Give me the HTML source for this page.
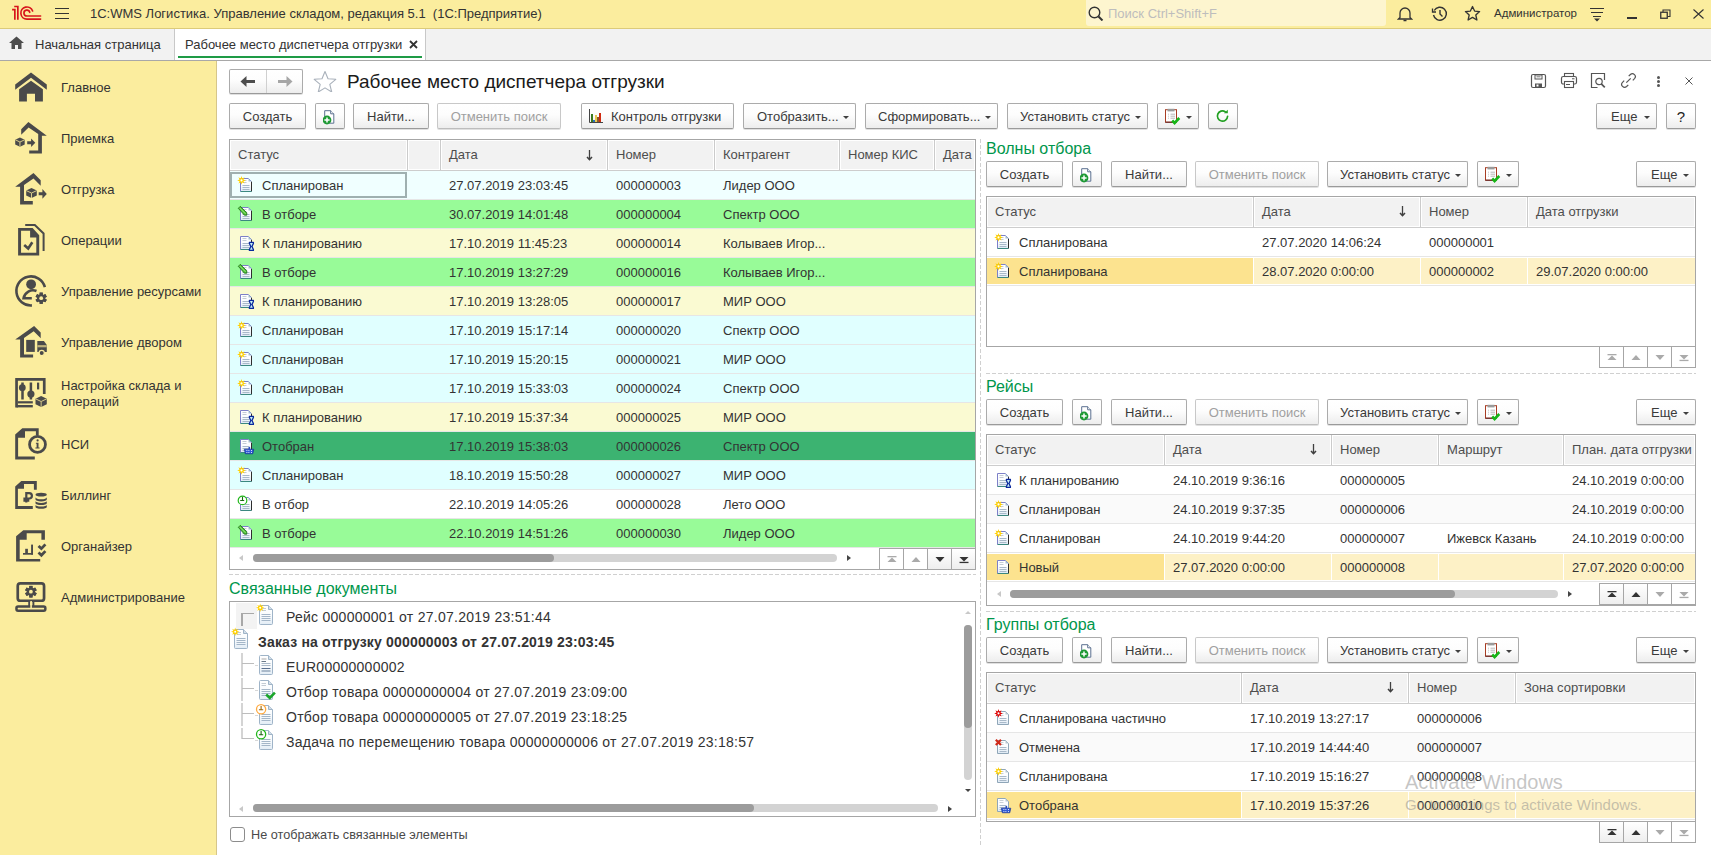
<!DOCTYPE html><html><head><meta charset="utf-8"><style>
*{box-sizing:border-box}
html,body{margin:0;padding:0}
body{width:1711px;height:855px;overflow:hidden;position:relative;background:#fff;font-family:"Liberation Sans",sans-serif;font-size:13px;color:#333}
.a{position:absolute}
.t{position:absolute;white-space:nowrap}
.btn{position:absolute;height:26px;border:1px solid #ababab;border-bottom-color:#9a9a9a;border-radius:2px;background:linear-gradient(#ffffff 0%,#fdfdfd 45%,#ededed 100%);box-shadow:0 1px 0 rgba(0,0,0,0.12);line-height:25px;text-align:center;white-space:nowrap;color:#3a3a3a;font-size:13px}
.btn.dis{color:#a0a0a0;border-color:#c8c8c8;border-bottom-color:#bdbdbd}
.dd{position:absolute;width:0;height:0;border-left:3px solid transparent;border-right:3px solid transparent;border-top:3px solid #404040;top:12px}
.grid{position:absolute;border:1px solid #a6a6a6;background:#fff;overflow:hidden}
.hdr{position:absolute;left:0;top:0;right:0;height:31px;background:#f2f2f2;border-bottom:1px solid #cdcdcd}
.hc{position:absolute;top:0;height:29px;line-height:29px;padding-left:8px;white-space:nowrap;color:#4d4d4d}
.hs{position:absolute;top:0;width:1px;height:30px;background:#cbcbcb}
.hcell{position:absolute;top:0;height:30px;border:1px solid #fff}
.row{position:absolute;left:0;right:0;height:29px;border-bottom:1px solid #e4e4e4}
.cell{position:absolute;top:0;height:28px;line-height:28px;white-space:nowrap;color:#333}
.ttl{position:absolute;font-size:16px;color:#00964b;white-space:nowrap}
.dash{position:absolute;height:1px;background-image:linear-gradient(90deg,#d0d0d0 0,#d0d0d0 4px,transparent 4px,transparent 6px);background-size:6px 1px}
.vdash{position:absolute;width:1px;background-image:linear-gradient(180deg,#d0d0d0 0,#d0d0d0 4px,transparent 4px,transparent 6px);background-size:1px 6px}
.sb{position:absolute;height:8px;border-radius:4px;background:#d3d3d3}
.sbt{position:absolute;height:8px;border-radius:4px;background:#9c9c9c}
.nav{position:absolute;height:22px;border:1px solid #a6a6a6;background:#fff}
.nb{position:absolute;top:0;width:24px;height:20px;border-left:1px solid #a6a6a6}
.nb.en{background:linear-gradient(#fff,#f0f0f0)}
.side{position:absolute;left:61px;font-size:13px;color:#333;white-space:nowrap}
</style></head><body><svg width="0" height="0" style="position:absolute"><defs><linearGradient id="pg" x1="0" y1="0" x2="0" y2="1"><stop offset="0" stop-color="#ffffff"/><stop offset="0.5" stop-color="#fbfdff"/><stop offset="1" stop-color="#dde9f4"/></linearGradient><linearGradient id="pg2" x1="0" y1="0" x2="0" y2="1"><stop offset="0" stop-color="#ffffff"/><stop offset="0.55" stop-color="#f8fbfd"/><stop offset="1" stop-color="#e2ecf5"/></linearGradient></defs></svg>
<div class="a" style="left:0;top:0;width:1711px;height:28px;background:#fbed9e"></div>
<div class="a" style="left:0;top:28px;width:1711px;height:1px;background:#dccb7a"></div>
<svg class="a" style="left:8px;top:2px;" width="40" height="22" viewBox="8 2 40 22"><path d="M12.1 9.6H14.85V19.8M14.2 6.5H17.85V19.8" fill="none" stroke="#d7141c" stroke-width="1.7"/><path d="M32.6 11.0A6.05 6.05 0 1 0 26.9 19.1H40.6M29.75 12.3A2.95 2.95 0 1 0 26.9 16.0H40.6" fill="none" stroke="#d7141c" stroke-width="1.65" stroke-linecap="round"/></svg>
<div class="a" style="left:55px;top:8px;width:14px;height:1px;background:#333"></div>
<div class="a" style="left:55px;top:13px;width:14px;height:1px;background:#333"></div>
<div class="a" style="left:55px;top:18px;width:14px;height:1px;background:#333"></div>
<div class="t" style="left:90px;top:6px;font-size:13px;color:#333;white-space:pre;">1С:WMS Логистика. Управление складом, редакция 5.1  (1С:Предприятие)</div>
<div class="a" style="left:1086px;top:0;width:300px;height:26px;background:#fdf5cf;border-radius:0 0 3px 3px"></div>
<svg class="a" style="left:1088px;top:6px;" width="16" height="15" viewBox="0 0 16 15"><circle cx="6.5" cy="6.5" r="5.3" fill="none" stroke="#333" stroke-width="1.4"/><path d="M10.5 10.5l4 4" stroke="#333" stroke-width="2"/></svg>
<div class="t" style="left:1108px;top:6px;font-size:13px;color:#bdbdbd;">Поиск Ctrl+Shift+F</div>
<svg class="a" style="left:1397px;top:5px;" width="16" height="17" viewBox="0 0 16 17"><path d="M3 12.5V8a5 5 0 0 1 10 0v4.5l1.5 1.5h-13z" fill="none" stroke="#333" stroke-width="1.3"/><path d="M6.5 15.5h3" stroke="#333" stroke-width="1.5"/></svg>
<svg class="a" style="left:1431px;top:5px;" width="17" height="17" viewBox="0 0 17 17"><path d="M3.2 5.5A6.5 6.5 0 1 1 2.5 10" fill="none" stroke="#333" stroke-width="1.4"/><path d="M1.5 3.5v3.5h3.5" fill="none" stroke="#333" stroke-width="1.3"/><path d="M9 5v4l2.5 2.5" fill="none" stroke="#333" stroke-width="1.4"/></svg>
<svg class="a" style="left:1464px;top:5px;" width="17" height="17" viewBox="0 0 17 17"><path d="M8.5 1.5l2.1 4.6 5 .5-3.8 3.4 1.1 5-4.4-2.6-4.4 2.6 1.1-5L1.4 6.6l5-.5z" fill="none" stroke="#333" stroke-width="1.3" stroke-linejoin="round"/></svg>
<div class="t" style="left:1494px;top:7px;font-size:11.5px;color:#333;">Администратор</div>
<svg class="a" style="left:1589px;top:7px;" width="16" height="15" viewBox="0 0 16 15"><path d="M1 1.5h14M2 5.5h12M4 9.5h8" stroke="#333" stroke-width="1.1"/><path d="M5 11.5h6l-3 3z" fill="#333"/></svg>
<div class="a" style="left:1627px;top:17px;width:10px;height:1.5px;background:#333"></div>
<svg class="a" style="left:1660px;top:9px;" width="11" height="10" viewBox="0 0 11 10"><rect x="0.75" y="3.25" width="6.5" height="6" fill="none" stroke="#333" stroke-width="1.3"/><path d="M3 3V1h7v6.5H7.5" fill="none" stroke="#333" stroke-width="1.1"/></svg>
<svg class="a" style="left:1693px;top:9px;" width="11" height="10" viewBox="0 0 11 10"><path d="M0.5 0.5l10 9M10.5 0.5l-10 9" stroke="#333" stroke-width="1.1"/></svg>
<div class="a" style="left:0;top:29px;width:1711px;height:31px;background:#f2f2f2"></div>
<div class="a" style="left:0;top:60px;width:1711px;height:1px;background:#a8a8a8"></div>
<svg class="a" style="left:9px;top:36px;" width="15" height="13" viewBox="0 0 15 13"><path d="M7.5 0.5L0 7h2.5v6h3.5v-4h3v4h3.5V7H15z" fill="#4d4d4d"/></svg>
<div class="t" style="left:35px;top:37px;font-size:13px;color:#333;">Начальная страница</div>
<div class="a" style="left:174px;top:29px;width:1px;height:31px;background:#c8c8c8"></div>
<div class="a" style="left:175px;top:29px;width:250px;height:31px;background:#fff"></div>
<div class="a" style="left:425px;top:29px;width:1px;height:31px;background:#c8c8c8"></div>
<div class="t" style="left:185px;top:37px;font-size:13px;color:#333;">Рабочее место диспетчера отгрузки</div>
<svg class="a" style="left:409px;top:40px;" width="9" height="9" viewBox="0 0 9 9"><path d="M1 1l7 7M8 1l-7 7" stroke="#333" stroke-width="1.8"/></svg>
<div class="a" style="left:178px;top:56px;width:244px;height:2px;background:#1e9b46"></div>
<div class="a" style="left:0;top:61px;width:216px;height:794px;background:#fbed9e"></div>
<div class="a" style="left:216px;top:61px;width:1px;height:794px;background:#d6c68a"></div>
<div class="t" style="left:61px;top:80px;font-size:13px;color:#333;">Главное</div>
<svg class="a" style="left:10px;top:66px;" width="42" height="42" viewBox="0 0 42 42"><path d="M21 6.4L36.8 18.4V23.8L21 11.8L5.2 23.8V18.4Z" fill="#4a4a4a"/><path d="M9.1 23.3L21 14.7L32.9 23.3V35.6H25V27.7H16.9V35.6H9.1Z" fill="#4a4a4a"/></svg>
<div class="t" style="left:61px;top:131px;font-size:13px;color:#333;">Приемка</div>
<svg class="a" style="left:10px;top:117px;" width="42" height="42" viewBox="0 0 42 42"><path d="M11.2 12.3L18.4 4.9L36.8 18.7H31.9V36.6H19.2V33.4H28.2V17.0L18.6 10.6L11.2 17.7Z" fill="#4a4a4a"/><path d="M9.95 20.4L14.7 22.725V27.375L9.95 29.700000000000003L5.199999999999999 27.375V22.725Z" fill="#4a4a4a"/><path d="M5.199999999999999 22.725L9.95 25.05L14.7 22.725M9.95 25.05V29.700000000000003" stroke="#d9cc8a" stroke-width="1" fill="none"/><path d="M17.2 24.3H21.1V21.6L25.3 25.8L21.1 30V27.3H17.2Z" fill="#4a4a4a"/></svg>
<div class="t" style="left:61px;top:182px;font-size:13px;color:#333;">Отгрузка</div>
<svg class="a" style="left:10px;top:168px;" width="42" height="42" viewBox="0 0 42 42"><path d="M5.2 18.7L23.5 4.9L30.7 12.3V17.7L23.5 10.6L14 17.0V32.9H22.8V36.6H10.1V18.7Z" fill="#4a4a4a"/><path d="M21.5 20.1L26.8 22.575V27.525000000000002L21.5 30.0L16.2 27.525000000000002V22.575Z" fill="#4a4a4a"/><path d="M16.2 22.575L21.5 25.05L26.8 22.575M21.5 25.05V30.0" stroke="#d9cc8a" stroke-width="1" fill="none"/><path d="M28.7 24.3H32.4V21.1L36.8 25.9L32.4 30.7V27.3H28.7Z" fill="#4a4a4a"/></svg>
<div class="t" style="left:61px;top:233px;font-size:13px;color:#333;">Операции</div>
<svg class="a" style="left:10px;top:219px;" width="42" height="42" viewBox="0 0 42 42"><path fill-rule="evenodd" d="M8.1 9.1H22.6L29.2 16.2V36.6H8.1Z M11.05 11.8H20.1V18.4H26.3V33.8H11.05Z" fill="#4a4a4a"/><path d="M14.2 26L18.2 29.5L22.3 23.3" stroke="#4a4a4a" stroke-width="2.6" fill="none"/><path d="M15.2 6.1H24.8L33.6 14.4V31.9" stroke="#4a4a4a" stroke-width="2" fill="none"/></svg>
<div class="t" style="left:61px;top:284px;font-size:13px;color:#333;">Управление ресурсами</div>
<svg class="a" style="left:10px;top:270px;" width="42" height="42" viewBox="0 0 42 42"><path d="M34.9 17.15A14.5 14.5 0 1 0 21.9 35.4" stroke="#4a4a4a" stroke-width="2.6" fill="none"/><circle cx="21.1" cy="14.3" r="4.9" fill="#4a4a4a"/><path d="M26.5 21.0A9.5 9.5 0 0 0 13.6 28.2H21.8" stroke="#4a4a4a" stroke-width="2.6" fill="none"/><circle cx="31.2" cy="28.2" r="4.032" fill="#4a4a4a"/><rect x="29.631999999999998" y="22.6" width="3.136" height="11.2" fill="#4a4a4a" transform="rotate(0 31.2 28.2)"/><rect x="29.631999999999998" y="22.6" width="3.136" height="11.2" fill="#4a4a4a" transform="rotate(60 31.2 28.2)"/><rect x="29.631999999999998" y="22.6" width="3.136" height="11.2" fill="#4a4a4a" transform="rotate(120 31.2 28.2)"/><rect x="29.631999999999998" y="22.6" width="3.136" height="11.2" fill="#4a4a4a" transform="rotate(180 31.2 28.2)"/><rect x="29.631999999999998" y="22.6" width="3.136" height="11.2" fill="#4a4a4a" transform="rotate(240 31.2 28.2)"/><rect x="29.631999999999998" y="22.6" width="3.136" height="11.2" fill="#4a4a4a" transform="rotate(300 31.2 28.2)"/><circle cx="31.2" cy="28.2" r="1.9" fill="#fbed9e"/></svg>
<div class="t" style="left:61px;top:335px;font-size:13px;color:#333;">Управление двором</div>
<svg class="a" style="left:10px;top:321px;" width="42" height="42" viewBox="0 0 42 42"><path d="M5.2 18.5L24.1 4.9L30.7 11.5V17.2L23.7 10.2L14 17.0V33.4H23.1V36.6H10.1V18.5Z" fill="#4a4a4a"/><rect x="16.2" y="18.9" width="8.6" height="12" fill="#4a4a4a"/><path d="M27.3 20.1H33.9L36.8 24.1V30.9H27.3Z" fill="#4a4a4a"/><rect x="27.3" y="24.1" width="9.5" height="2.2" fill="#bdb07a"/><circle cx="31.7" cy="31.9" r="2.6" fill="#4a4a4a" stroke="#fbed9e" stroke-width="1.2"/></svg>
<div class="t" style="left:61px;top:378px;font-size:13px;color:#333;">Настройка склада и</div>
<div class="t" style="left:61px;top:394px;font-size:13px;color:#333;">операций</div>
<svg class="a" style="left:10px;top:372px;" width="42" height="42" viewBox="0 0 42 42"><path d="M6.55 35.4V7.45H34.25V22.1" stroke="#4a4a4a" stroke-width="2.7" fill="none"/><path d="M6.55 34.2H22.8" stroke="#4a4a4a" stroke-width="2.4"/><path d="M7.9 30.3H22.8" stroke="#4a4a4a" stroke-width="2.2"/><path d="M12.5 10.6V27.5M20.9 10.6V27.5" stroke="#4a4a4a" stroke-width="2.5"/><path d="M28.1 10.6V17.4" stroke="#4a4a4a" stroke-width="2.2"/><circle cx="12.3" cy="15.7" r="3.4" fill="#4a4a4a"/><circle cx="20.9" cy="22.1" r="3.6" fill="#4a4a4a"/><path d="M31.15 24.1L36.8 26.8V32.2L31.15 34.9L25.5 32.2V26.8Z" fill="#4a4a4a"/><path d="M25.5 26.8L31.15 29.5L36.8 26.8M31.15 29.5V34.9" stroke="#d9cc8a" stroke-width="1" fill="none"/></svg>
<div class="t" style="left:61px;top:437px;font-size:13px;color:#333;">НСИ</div>
<svg class="a" style="left:10px;top:423px;" width="42" height="42" viewBox="0 0 42 42"><path d="M5.2 11.5L12.3 5.2H28.7V12.5H25.9V8.3H15V14.7H8.1V33.4H24.8V36.6H5.2Z" fill="#4a4a4a"/><circle cx="27.5" cy="21.4" r="7.95" stroke="#4a4a4a" stroke-width="2.8" fill="#fbed9e"/><circle cx="27.6" cy="17.4" r="1.1" fill="#4a4a4a"/><path d="M25.9 19.7H28.5V24.5H29.6V25.6H25.4V24.5H26.6V20.7H25.9Z" fill="#4a4a4a"/></svg>
<div class="t" style="left:61px;top:488px;font-size:13px;color:#333;">Биллинг</div>
<svg class="a" style="left:10px;top:474px;" width="42" height="42" viewBox="0 0 42 42"><path d="M5.2 12.5L11.3 7.1H26.8V15.7H23.9V9.9H14V14.7H7.9V31.9H22.8V34.9H5.2Z" fill="#4a4a4a"/><path d="M16.3 28.6V19.1H19.2A2.7 2.7 0 0 1 19.2 24.5H13.4M13.4 26.7H19.3" stroke="#4a4a4a" stroke-width="2.2" fill="none"/><ellipse cx="31.15" cy="20.7" rx="5.65" ry="1.9" fill="#4a4a4a"/><path d="M25.5 23.3A5.65 1.9 0 0 0 36.8 23.3V25.5A5.65 1.9 0 0 1 25.5 25.5Z M25.5 27.0A5.65 1.9 0 0 0 36.8 27.0V29.2A5.65 1.9 0 0 1 25.5 29.2Z M25.5 30.7A5.65 1.9 0 0 0 36.8 30.7V32.9A5.65 1.9 0 0 1 25.5 32.9Z" fill="#4a4a4a"/></svg>
<div class="t" style="left:61px;top:539px;font-size:13px;color:#333;">Органайзер</div>
<svg class="a" style="left:10px;top:525px;" width="42" height="42" viewBox="0 0 42 42"><path d="M6.1 11.3L13.3 5.2H34.9V14.7H31.4V8.2H16.7V14.7H9.7V33.9H30.2V36.6H6.1Z" fill="#4a4a4a"/><rect x="15.2" y="23.8" width="2.7" height="5" fill="#4a4a4a"/><rect x="21.1" y="19.6" width="1.9" height="10" fill="#4a4a4a"/><rect x="13" y="28" width="10" height="1.7" fill="#4a4a4a"/><path d="M28.5 20.9L31.4 23.6L35.4 19.4M28.5 27.6L31.4 30.3L35.4 26.1" stroke="#4a4a4a" stroke-width="2.8" fill="none"/></svg>
<div class="t" style="left:61px;top:590px;font-size:13px;color:#333;">Администрирование</div>
<svg class="a" style="left:10px;top:576px;" width="42" height="42" viewBox="0 0 42 42"><rect x="7.75" y="7.45" width="26.3" height="17.3" rx="2.6" stroke="#4a4a4a" stroke-width="2.7" fill="none"/><path d="M19.2 24.5V30.2M23.4 24.5V30.2" stroke="#4a4a4a" stroke-width="1.9"/><rect x="6.45" y="30.6" width="28.9" height="4.1" rx="1.6" stroke="#4a4a4a" stroke-width="2.5" fill="none"/><rect x="20.3" y="25" width="1.6" height="7" fill="#fbed9e"/><circle cx="20.9" cy="15.7" r="4.176" fill="#4a4a4a"/><rect x="19.276" y="9.899999999999999" width="3.248" height="11.6" fill="#4a4a4a" transform="rotate(0 20.9 15.7)"/><rect x="19.276" y="9.899999999999999" width="3.248" height="11.6" fill="#4a4a4a" transform="rotate(60 20.9 15.7)"/><rect x="19.276" y="9.899999999999999" width="3.248" height="11.6" fill="#4a4a4a" transform="rotate(120 20.9 15.7)"/><rect x="19.276" y="9.899999999999999" width="3.248" height="11.6" fill="#4a4a4a" transform="rotate(180 20.9 15.7)"/><rect x="19.276" y="9.899999999999999" width="3.248" height="11.6" fill="#4a4a4a" transform="rotate(240 20.9 15.7)"/><rect x="19.276" y="9.899999999999999" width="3.248" height="11.6" fill="#4a4a4a" transform="rotate(300 20.9 15.7)"/><circle cx="20.9" cy="15.7" r="1.9" fill="#fbed9e"/></svg>
<div class="btn" style="left:229px;top:69px;width:74px;height:25px"></div>
<div class="a" style="left:266px;top:70px;width:1px;height:23px;background:#d0d0d0"></div>
<svg class="a" style="left:240px;top:75px;" width="16" height="13" viewBox="0 0 16 13"><path d="M6.5 1L0.5 6.5 6.5 12z" fill="#4d4d4d"/><rect x="5" y="5" width="10" height="3" fill="#4d4d4d"/></svg>
<svg class="a" style="left:277px;top:75px;" width="16" height="13" viewBox="0 0 16 13"><path d="M9.5 1L15.5 6.5 9.5 12z" fill="#a6a6a6"/><rect x="1" y="5" width="10" height="3" fill="#a6a6a6"/></svg>
<svg class="a" style="left:313px;top:70px;" width="24" height="22" viewBox="0 0 24 22"><path d="M12 1.5l3 7.2 7.8.6-6 5.1 1.9 7.6L12 17.9l-6.7 4.1 1.9-7.6-6-5.1 7.8-.6z" fill="none" stroke="#a9b1bb" stroke-width="1.1" stroke-linejoin="round"/></svg>
<div class="t" style="left:347px;top:71px;font-size:19px;color:#1a1a1a;">Рабочее место диспетчера отгрузки</div>
<svg class="a" style="left:1530px;top:73px;" width="17" height="16" viewBox="0 0 17 16"><rect x="1.5" y="1.5" width="14" height="13" rx="1.5" fill="none" stroke="#555" stroke-width="1.2"/><rect x="5" y="2" width="7" height="4" fill="none" stroke="#555" stroke-width="1"/><path d="M6.5 3.8H10.5" stroke="#555" stroke-width="0.8"/><rect x="5" y="10.5" width="7" height="4" fill="#555"/><rect x="6.5" y="11.5" width="2" height="2" fill="#fff"/></svg>
<svg class="a" style="left:1560px;top:72px;" width="18" height="17" viewBox="0 0 18 17"><rect x="4.5" y="1.5" width="9" height="3" fill="none" stroke="#555" stroke-width="1.1"/><rect x="1.5" y="4.5" width="15" height="7.5" rx="1.8" fill="none" stroke="#555" stroke-width="1.2"/><rect x="4.5" y="9.5" width="9" height="6" fill="#fff" stroke="#555" stroke-width="1.1"/><path d="M6 12.5H10M12 6.8H14.5" stroke="#555" stroke-width="1"/></svg>
<svg class="a" style="left:1590px;top:72px;" width="17" height="17" viewBox="0 0 17 17"><path d="M7.5 15.5H1.5V1.5H14.5V8" fill="none" stroke="#555" stroke-width="1.2"/><circle cx="9" cy="9.5" r="3.2" fill="none" stroke="#555" stroke-width="1.2"/><path d="M11.3 11.8L14.8 15.3" stroke="#555" stroke-width="1.7"/></svg>
<svg class="a" style="left:1620px;top:72px;" width="17" height="17" viewBox="0 0 17 17"><path d="M6.3 10.7L10.7 6.3" stroke="#555" stroke-width="1.2"/><path d="M8.7 4.2L10.4 2.5A2.9 2.9 0 0 1 14.5 6.6L12.8 8.3" fill="none" stroke="#555" stroke-width="1.2"/><path d="M8.3 12.8L6.6 14.5A2.9 2.9 0 0 1 2.5 10.4L4.2 8.7" fill="none" stroke="#555" stroke-width="1.2"/></svg>
<div class="a" style="left:1657px;top:76px;width:3px;height:3px;border-radius:50%;background:#555"></div>
<div class="a" style="left:1657px;top:80px;width:3px;height:3px;border-radius:50%;background:#555"></div>
<div class="a" style="left:1657px;top:84px;width:3px;height:3px;border-radius:50%;background:#555"></div>
<svg class="a" style="left:1684px;top:76px;" width="10" height="10" viewBox="0 0 10 10"><path d="M1.5 1.5l7 7M8.5 1.5l-7 7" stroke="#555" stroke-width="1"/></svg>
<div class="btn" style="left:229px;top:103px;width:77px">Создать</div>
<div class="btn" style="left:315px;top:103px;width:30px"></div>
<svg class="a" style="left:323px;top:109px;" width="14" height="16" viewBox="0 0 14 16"><path d="M1.7 1.7H7.7L10.8 4.8V14.2H1.7Z" fill="#fff" stroke="#5c7191" stroke-width="1"/><path d="M7.7 1.7V4.8H10.8" fill="#fff" stroke="#5c7191" stroke-width="1"/><circle cx="4" cy="11" r="4.4" fill="#1f9a35"/><path d="M4 8.4V13.6M1.4 11H6.6" stroke="#fff" stroke-width="1.5"/></svg>
<div class="btn" style="left:353px;top:103px;width:76px">Найти...</div>
<div class="btn dis" style="left:437px;top:103px;width:124px">Отменить поиск</div>
<div class="btn" style="left:581px;top:103px;width:153px"><span class="t" style="left:29px;top:0">Контроль отгрузки</span></div>
<svg class="a" style="left:588px;top:108px;" width="16" height="16" viewBox="0 0 16 16"><path d="M1.5 1V14.5H15" fill="none" stroke="#444" stroke-width="1"/><rect x="3" y="6" width="2" height="8" fill="#3a7a20"/><rect x="5" y="12" width="2" height="2" fill="#2a70c0"/><rect x="7" y="7" width="2" height="7" fill="#e8c850"/><rect x="9" y="9" width="2" height="5" fill="#8a5a30"/><rect x="11" y="5" width="2" height="9" fill="#d02a10"/></svg>
<div class="btn" style="left:743px;top:103px;width:113px"><span class="t" style="left:13px;top:0">Отобразить...</span><div class="dd" style="left:99px"></div></div>
<div class="btn" style="left:865px;top:103px;width:133px"><span class="t" style="left:12px;top:0">Сформировать...</span><div class="dd" style="left:119px"></div></div>
<div class="btn" style="left:1007px;top:103px;width:141px"><span class="t" style="left:12px;top:0">Установить статус</span><div class="dd" style="left:127px"></div></div>
<div class="btn" style="left:1157px;top:103px;width:42px"></div>
<svg class="a" style="left:1164px;top:107px;" width="18" height="18" viewBox="0 0 18 18"><rect x="1.5" y="2.7" width="11" height="12.5" fill="#fff" stroke="#a83c22" stroke-width="1"/><path d="M1.5 15.2H12.5" stroke="#5a2020" stroke-width="1"/><rect x="3.5" y="1.8" width="7" height="2.6" fill="#9a9a9a"/><path d="M4.5 7.2H5M4.5 9.2H5M4.5 11.2H5" stroke="#888"/><path d="M6.5 7.2H11M6.5 9.2H11M6.5 11.2H11" stroke="#b8b8b8"/><path d="M8.2 13.5L10.6 16L15.3 11" stroke="#17b517" stroke-width="2.6" fill="none"/></svg>
<div class="dd" style="left:1186px;top:116px"></div>
<div class="btn" style="left:1208px;top:103px;width:30px"></div>
<svg class="a" style="left:1215px;top:108px;" width="16" height="16" viewBox="0 0 16 16"><path d="M12.6 8.3A5.1 5.1 0 1 1 10.2 3.7" fill="none" stroke="#22a022" stroke-width="1.7" stroke-linecap="round"/><path d="M9 5.3H12.8V1.7Z" fill="#22a022"/></svg>
<div class="btn" style="left:1596px;top:103px;width:61px"><span class="t" style="left:14px;top:0">Еще</span><div class="dd" style="left:47px"></div></div>
<div class="btn" style="left:1666px;top:103px;width:30px;color:#222;font-size:15px">?</div>
<div class="grid" style="left:229px;top:139px;width:747px;height:431px">
<div class="hdr"></div>
<div class="hcell" style="left:0px;width:177px"></div>
<div class="hcell" style="left:178px;width:32px"></div>
<div class="hcell" style="left:211px;width:166px"></div>
<div class="hcell" style="left:378px;width:106px"></div>
<div class="hcell" style="left:485px;width:124px"></div>
<div class="hcell" style="left:610px;width:94px"></div>
<div class="hcell" style="left:705px;width:40px"></div>
<div class="hc" style="left:0px">Статус</div>
<div class="hs" style="left:177px"></div>
<div class="hs" style="left:210px"></div>
<div class="hc" style="left:211px">Дата</div>
<div class="hs" style="left:377px"></div>
<div class="hc" style="left:378px">Номер</div>
<div class="hs" style="left:484px"></div>
<div class="hc" style="left:485px">Контрагент</div>
<div class="hs" style="left:609px"></div>
<div class="hc" style="left:610px">Номер КИС</div>
<div class="hs" style="left:704px"></div>
<div class="hc" style="left:705px">Дата</div>
</div>
<div class="a" style="left:230px;top:171px;width:745px;height:28px;background:#f0ffff"></div>
<div class="a" style="left:230px;top:199px;width:745px;height:1px;background:#e6e6e6"></div>
<svg class="a" style="left:234px;top:174px;" width="22" height="22" viewBox="0 0 22 22"><path d="M6.5 4.5H14.5L17.5 7.5V17.5H6.5Z" fill="url(#pg)"/><path d="M8.5 6.5H12.5M8.5 8.5H12.5" stroke="#c4ccd4" stroke-width="1"/><path d="M8.5 11.5H15.5M8.5 13.5H15.5M8.5 15.5H15.5" stroke="#a9b9c9" stroke-width="1"/><path d="M6.5 17.5V4.5H14.5" stroke="#7d80c8" stroke-width="1" fill="none"/><path d="M17.5 7.5V17.5" stroke="#2e2e2e" stroke-width="1"/><path d="M6.5 17.5H17.5" stroke="#3b8880" stroke-width="1"/><path d="M14.5 4.5V7.5H17.5Z" fill="#a7c0cc"/><path d="M14.5 4.5L17.5 7.5" stroke="#8a9cd0" stroke-width="1"/><path d="M7.50 2.10L8.30 4.46L10.54 3.36L9.44 5.60L11.80 6.40L9.44 7.20L10.54 9.44L8.30 8.34L7.50 10.70L6.70 8.34L4.46 9.44L5.56 7.20L3.20 6.40L5.56 5.60L4.46 3.36L6.70 4.46Z" fill="#ffd000"/><circle cx="7.5" cy="6.4" r="1.05" fill="#fff"/></svg>
<div class="t" style="left:262px;top:178px;font-size:13px;">Спланирован</div>
<div class="t" style="left:449px;top:178px;font-size:13px;">27.07.2019 23:03:45</div>
<div class="t" style="left:616px;top:178px;font-size:13px;">000000003</div>
<div class="t" style="left:723px;top:178px;font-size:13px;">Лидер ООО</div>
<div class="a" style="left:230px;top:200px;width:745px;height:28px;background:#98fb98"></div>
<div class="a" style="left:230px;top:228px;width:745px;height:1px;background:#e6e6e6"></div>
<svg class="a" style="left:234px;top:203px;" width="22" height="22" viewBox="0 0 22 22"><path d="M6.5 4.5H14.5L17.5 7.5V17.5H6.5Z" fill="url(#pg)"/><path d="M8.5 6.5H12.5M8.5 8.5H12.5" stroke="#c4ccd4" stroke-width="1"/><path d="M8.5 11.5H15.5M8.5 13.5H15.5M8.5 15.5H15.5" stroke="#a9b9c9" stroke-width="1"/><path d="M6.5 17.5V4.5H14.5" stroke="#7d80c8" stroke-width="1" fill="none"/><path d="M17.5 7.5V17.5" stroke="#2e2e2e" stroke-width="1"/><path d="M6.5 17.5H17.5" stroke="#3b8880" stroke-width="1"/><path d="M14.5 4.5V7.5H17.5Z" fill="#a7c0cc"/><path d="M14.5 4.5L17.5 7.5" stroke="#8a9cd0" stroke-width="1"/><path d="M4.3 5.3L6.3 3.3L12.8 9.8V12.2H10.4Z" fill="#48c030" stroke="#1f6e1a" stroke-width="0.8" stroke-linejoin="round"/><path d="M5.5 4.8L11.5 10.8" stroke="#b8f0a0" stroke-width="0.8"/></svg>
<div class="t" style="left:262px;top:207px;font-size:13px;">В отборе</div>
<div class="t" style="left:449px;top:207px;font-size:13px;">30.07.2019 14:01:48</div>
<div class="t" style="left:616px;top:207px;font-size:13px;">000000004</div>
<div class="t" style="left:723px;top:207px;font-size:13px;">Спектр ООО</div>
<div class="a" style="left:230px;top:229px;width:745px;height:28px;background:#fafad2"></div>
<div class="a" style="left:230px;top:257px;width:745px;height:1px;background:#e6e6e6"></div>
<svg class="a" style="left:234px;top:232px;" width="22" height="22" viewBox="0 0 22 22"><path d="M6.5 4.5H14.5L17.5 7.5V17.5H6.5Z" fill="url(#pg)"/><path d="M8.5 6.5H12.5M8.5 8.5H12.5" stroke="#c4ccd4" stroke-width="1"/><path d="M8.5 11.5H15.5M8.5 13.5H15.5M8.5 15.5H15.5" stroke="#a9b9c9" stroke-width="1"/><path d="M6.5 17.5V4.5H14.5" stroke="#7d80c8" stroke-width="1" fill="none"/><path d="M17.5 7.5V17.5" stroke="#2e2e2e" stroke-width="1"/><path d="M6.5 17.5H17.5" stroke="#3b8880" stroke-width="1"/><path d="M14.5 4.5V7.5H17.5Z" fill="#a7c0cc"/><path d="M14.5 4.5L17.5 7.5" stroke="#8a9cd0" stroke-width="1"/><path d="M15.4 10.4H19.4V11.4L18 14.4L19.4 17.4V18.4H15.4V17.4L16.8 14.4L15.4 11.4Z" fill="#c8f0f4" stroke="#0b2a9e" stroke-width="1.3" stroke-linejoin="round"/></svg>
<div class="t" style="left:262px;top:236px;font-size:13px;">К планированию</div>
<div class="t" style="left:449px;top:236px;font-size:13px;">17.10.2019 11:45:23</div>
<div class="t" style="left:616px;top:236px;font-size:13px;">000000014</div>
<div class="t" style="left:723px;top:236px;font-size:13px;">Колываев Игор...</div>
<div class="a" style="left:230px;top:258px;width:745px;height:28px;background:#98fb98"></div>
<div class="a" style="left:230px;top:286px;width:745px;height:1px;background:#e6e6e6"></div>
<svg class="a" style="left:234px;top:261px;" width="22" height="22" viewBox="0 0 22 22"><path d="M6.5 4.5H14.5L17.5 7.5V17.5H6.5Z" fill="url(#pg)"/><path d="M8.5 6.5H12.5M8.5 8.5H12.5" stroke="#c4ccd4" stroke-width="1"/><path d="M8.5 11.5H15.5M8.5 13.5H15.5M8.5 15.5H15.5" stroke="#a9b9c9" stroke-width="1"/><path d="M6.5 17.5V4.5H14.5" stroke="#7d80c8" stroke-width="1" fill="none"/><path d="M17.5 7.5V17.5" stroke="#2e2e2e" stroke-width="1"/><path d="M6.5 17.5H17.5" stroke="#3b8880" stroke-width="1"/><path d="M14.5 4.5V7.5H17.5Z" fill="#a7c0cc"/><path d="M14.5 4.5L17.5 7.5" stroke="#8a9cd0" stroke-width="1"/><path d="M4.3 5.3L6.3 3.3L12.8 9.8V12.2H10.4Z" fill="#48c030" stroke="#1f6e1a" stroke-width="0.8" stroke-linejoin="round"/><path d="M5.5 4.8L11.5 10.8" stroke="#b8f0a0" stroke-width="0.8"/></svg>
<div class="t" style="left:262px;top:265px;font-size:13px;">В отборе</div>
<div class="t" style="left:449px;top:265px;font-size:13px;">17.10.2019 13:27:29</div>
<div class="t" style="left:616px;top:265px;font-size:13px;">000000016</div>
<div class="t" style="left:723px;top:265px;font-size:13px;">Колываев Игор...</div>
<div class="a" style="left:230px;top:287px;width:745px;height:28px;background:#fafad2"></div>
<div class="a" style="left:230px;top:315px;width:745px;height:1px;background:#e6e6e6"></div>
<svg class="a" style="left:234px;top:290px;" width="22" height="22" viewBox="0 0 22 22"><path d="M6.5 4.5H14.5L17.5 7.5V17.5H6.5Z" fill="url(#pg)"/><path d="M8.5 6.5H12.5M8.5 8.5H12.5" stroke="#c4ccd4" stroke-width="1"/><path d="M8.5 11.5H15.5M8.5 13.5H15.5M8.5 15.5H15.5" stroke="#a9b9c9" stroke-width="1"/><path d="M6.5 17.5V4.5H14.5" stroke="#7d80c8" stroke-width="1" fill="none"/><path d="M17.5 7.5V17.5" stroke="#2e2e2e" stroke-width="1"/><path d="M6.5 17.5H17.5" stroke="#3b8880" stroke-width="1"/><path d="M14.5 4.5V7.5H17.5Z" fill="#a7c0cc"/><path d="M14.5 4.5L17.5 7.5" stroke="#8a9cd0" stroke-width="1"/><path d="M15.4 10.4H19.4V11.4L18 14.4L19.4 17.4V18.4H15.4V17.4L16.8 14.4L15.4 11.4Z" fill="#c8f0f4" stroke="#0b2a9e" stroke-width="1.3" stroke-linejoin="round"/></svg>
<div class="t" style="left:262px;top:294px;font-size:13px;">К планированию</div>
<div class="t" style="left:449px;top:294px;font-size:13px;">17.10.2019 13:28:05</div>
<div class="t" style="left:616px;top:294px;font-size:13px;">000000017</div>
<div class="t" style="left:723px;top:294px;font-size:13px;">МИР ООО</div>
<div class="a" style="left:230px;top:316px;width:745px;height:28px;background:#e0ffff"></div>
<div class="a" style="left:230px;top:344px;width:745px;height:1px;background:#e6e6e6"></div>
<svg class="a" style="left:234px;top:319px;" width="22" height="22" viewBox="0 0 22 22"><path d="M6.5 4.5H14.5L17.5 7.5V17.5H6.5Z" fill="url(#pg)"/><path d="M8.5 6.5H12.5M8.5 8.5H12.5" stroke="#c4ccd4" stroke-width="1"/><path d="M8.5 11.5H15.5M8.5 13.5H15.5M8.5 15.5H15.5" stroke="#a9b9c9" stroke-width="1"/><path d="M6.5 17.5V4.5H14.5" stroke="#7d80c8" stroke-width="1" fill="none"/><path d="M17.5 7.5V17.5" stroke="#2e2e2e" stroke-width="1"/><path d="M6.5 17.5H17.5" stroke="#3b8880" stroke-width="1"/><path d="M14.5 4.5V7.5H17.5Z" fill="#a7c0cc"/><path d="M14.5 4.5L17.5 7.5" stroke="#8a9cd0" stroke-width="1"/><path d="M7.50 2.10L8.30 4.46L10.54 3.36L9.44 5.60L11.80 6.40L9.44 7.20L10.54 9.44L8.30 8.34L7.50 10.70L6.70 8.34L4.46 9.44L5.56 7.20L3.20 6.40L5.56 5.60L4.46 3.36L6.70 4.46Z" fill="#ffd000"/><circle cx="7.5" cy="6.4" r="1.05" fill="#fff"/></svg>
<div class="t" style="left:262px;top:323px;font-size:13px;">Спланирован</div>
<div class="t" style="left:449px;top:323px;font-size:13px;">17.10.2019 15:17:14</div>
<div class="t" style="left:616px;top:323px;font-size:13px;">000000020</div>
<div class="t" style="left:723px;top:323px;font-size:13px;">Спектр ООО</div>
<div class="a" style="left:230px;top:345px;width:745px;height:28px;background:#e0ffff"></div>
<div class="a" style="left:230px;top:373px;width:745px;height:1px;background:#e6e6e6"></div>
<svg class="a" style="left:234px;top:348px;" width="22" height="22" viewBox="0 0 22 22"><path d="M6.5 4.5H14.5L17.5 7.5V17.5H6.5Z" fill="url(#pg)"/><path d="M8.5 6.5H12.5M8.5 8.5H12.5" stroke="#c4ccd4" stroke-width="1"/><path d="M8.5 11.5H15.5M8.5 13.5H15.5M8.5 15.5H15.5" stroke="#a9b9c9" stroke-width="1"/><path d="M6.5 17.5V4.5H14.5" stroke="#7d80c8" stroke-width="1" fill="none"/><path d="M17.5 7.5V17.5" stroke="#2e2e2e" stroke-width="1"/><path d="M6.5 17.5H17.5" stroke="#3b8880" stroke-width="1"/><path d="M14.5 4.5V7.5H17.5Z" fill="#a7c0cc"/><path d="M14.5 4.5L17.5 7.5" stroke="#8a9cd0" stroke-width="1"/><path d="M7.50 2.10L8.30 4.46L10.54 3.36L9.44 5.60L11.80 6.40L9.44 7.20L10.54 9.44L8.30 8.34L7.50 10.70L6.70 8.34L4.46 9.44L5.56 7.20L3.20 6.40L5.56 5.60L4.46 3.36L6.70 4.46Z" fill="#ffd000"/><circle cx="7.5" cy="6.4" r="1.05" fill="#fff"/></svg>
<div class="t" style="left:262px;top:352px;font-size:13px;">Спланирован</div>
<div class="t" style="left:449px;top:352px;font-size:13px;">17.10.2019 15:20:15</div>
<div class="t" style="left:616px;top:352px;font-size:13px;">000000021</div>
<div class="t" style="left:723px;top:352px;font-size:13px;">МИР ООО</div>
<div class="a" style="left:230px;top:374px;width:745px;height:28px;background:#e0ffff"></div>
<div class="a" style="left:230px;top:402px;width:745px;height:1px;background:#e6e6e6"></div>
<svg class="a" style="left:234px;top:377px;" width="22" height="22" viewBox="0 0 22 22"><path d="M6.5 4.5H14.5L17.5 7.5V17.5H6.5Z" fill="url(#pg)"/><path d="M8.5 6.5H12.5M8.5 8.5H12.5" stroke="#c4ccd4" stroke-width="1"/><path d="M8.5 11.5H15.5M8.5 13.5H15.5M8.5 15.5H15.5" stroke="#a9b9c9" stroke-width="1"/><path d="M6.5 17.5V4.5H14.5" stroke="#7d80c8" stroke-width="1" fill="none"/><path d="M17.5 7.5V17.5" stroke="#2e2e2e" stroke-width="1"/><path d="M6.5 17.5H17.5" stroke="#3b8880" stroke-width="1"/><path d="M14.5 4.5V7.5H17.5Z" fill="#a7c0cc"/><path d="M14.5 4.5L17.5 7.5" stroke="#8a9cd0" stroke-width="1"/><path d="M7.50 2.10L8.30 4.46L10.54 3.36L9.44 5.60L11.80 6.40L9.44 7.20L10.54 9.44L8.30 8.34L7.50 10.70L6.70 8.34L4.46 9.44L5.56 7.20L3.20 6.40L5.56 5.60L4.46 3.36L6.70 4.46Z" fill="#ffd000"/><circle cx="7.5" cy="6.4" r="1.05" fill="#fff"/></svg>
<div class="t" style="left:262px;top:381px;font-size:13px;">Спланирован</div>
<div class="t" style="left:449px;top:381px;font-size:13px;">17.10.2019 15:33:03</div>
<div class="t" style="left:616px;top:381px;font-size:13px;">000000024</div>
<div class="t" style="left:723px;top:381px;font-size:13px;">Спектр ООО</div>
<div class="a" style="left:230px;top:403px;width:745px;height:28px;background:#fafad2"></div>
<div class="a" style="left:230px;top:431px;width:745px;height:1px;background:#e6e6e6"></div>
<svg class="a" style="left:234px;top:406px;" width="22" height="22" viewBox="0 0 22 22"><path d="M6.5 4.5H14.5L17.5 7.5V17.5H6.5Z" fill="url(#pg)"/><path d="M8.5 6.5H12.5M8.5 8.5H12.5" stroke="#c4ccd4" stroke-width="1"/><path d="M8.5 11.5H15.5M8.5 13.5H15.5M8.5 15.5H15.5" stroke="#a9b9c9" stroke-width="1"/><path d="M6.5 17.5V4.5H14.5" stroke="#7d80c8" stroke-width="1" fill="none"/><path d="M17.5 7.5V17.5" stroke="#2e2e2e" stroke-width="1"/><path d="M6.5 17.5H17.5" stroke="#3b8880" stroke-width="1"/><path d="M14.5 4.5V7.5H17.5Z" fill="#a7c0cc"/><path d="M14.5 4.5L17.5 7.5" stroke="#8a9cd0" stroke-width="1"/><path d="M15.4 10.4H19.4V11.4L18 14.4L19.4 17.4V18.4H15.4V17.4L16.8 14.4L15.4 11.4Z" fill="#c8f0f4" stroke="#0b2a9e" stroke-width="1.3" stroke-linejoin="round"/></svg>
<div class="t" style="left:262px;top:410px;font-size:13px;">К планированию</div>
<div class="t" style="left:449px;top:410px;font-size:13px;">17.10.2019 15:37:34</div>
<div class="t" style="left:616px;top:410px;font-size:13px;">000000025</div>
<div class="t" style="left:723px;top:410px;font-size:13px;">МИР ООО</div>
<div class="a" style="left:230px;top:432px;width:745px;height:28px;background:#3cb371"></div>
<div class="a" style="left:230px;top:460px;width:745px;height:1px;background:#e6e6e6"></div>
<svg class="a" style="left:234px;top:435px;" width="22" height="22" viewBox="0 0 22 22"><path d="M6.5 4.5H14.5L17.5 7.5V17.5H6.5Z" fill="url(#pg)"/><path d="M8.5 6.5H12.5M8.5 8.5H12.5" stroke="#c4ccd4" stroke-width="1"/><path d="M8.5 11.5H15.5M8.5 13.5H15.5M8.5 15.5H15.5" stroke="#a9b9c9" stroke-width="1"/><path d="M6.5 17.5V4.5H14.5" stroke="#7d80c8" stroke-width="1" fill="none"/><path d="M17.5 7.5V17.5" stroke="#2e2e2e" stroke-width="1"/><path d="M6.5 17.5H17.5" stroke="#3b8880" stroke-width="1"/><path d="M14.5 4.5V7.5H17.5Z" fill="#a7c0cc"/><path d="M14.5 4.5L17.5 7.5" stroke="#8a9cd0" stroke-width="1"/><rect x="14.5" y="12" width="1.6" height="2.5" fill="#2a50c8"/><path d="M10.3 14.2H19.8L18.8 18.8H11.3Z" fill="#2f5ad8" stroke="#0f2a90" stroke-width="0.6"/><path d="M12.5 15.5h.8M14.5 15.5h.8M17 15.5h.8M12.5 17.5h.8M14.5 17.5h.8M17 17.5h.8" stroke="#fff" stroke-width="1.1"/></svg>
<div class="t" style="left:262px;top:439px;font-size:13px;">Отобран</div>
<div class="t" style="left:449px;top:439px;font-size:13px;">17.10.2019 15:38:03</div>
<div class="t" style="left:616px;top:439px;font-size:13px;">000000026</div>
<div class="t" style="left:723px;top:439px;font-size:13px;">Спектр ООО</div>
<div class="a" style="left:230px;top:461px;width:745px;height:28px;background:#e0ffff"></div>
<div class="a" style="left:230px;top:489px;width:745px;height:1px;background:#e6e6e6"></div>
<svg class="a" style="left:234px;top:464px;" width="22" height="22" viewBox="0 0 22 22"><path d="M6.5 4.5H14.5L17.5 7.5V17.5H6.5Z" fill="url(#pg)"/><path d="M8.5 6.5H12.5M8.5 8.5H12.5" stroke="#c4ccd4" stroke-width="1"/><path d="M8.5 11.5H15.5M8.5 13.5H15.5M8.5 15.5H15.5" stroke="#a9b9c9" stroke-width="1"/><path d="M6.5 17.5V4.5H14.5" stroke="#7d80c8" stroke-width="1" fill="none"/><path d="M17.5 7.5V17.5" stroke="#2e2e2e" stroke-width="1"/><path d="M6.5 17.5H17.5" stroke="#3b8880" stroke-width="1"/><path d="M14.5 4.5V7.5H17.5Z" fill="#a7c0cc"/><path d="M14.5 4.5L17.5 7.5" stroke="#8a9cd0" stroke-width="1"/><path d="M7.50 2.10L8.30 4.46L10.54 3.36L9.44 5.60L11.80 6.40L9.44 7.20L10.54 9.44L8.30 8.34L7.50 10.70L6.70 8.34L4.46 9.44L5.56 7.20L3.20 6.40L5.56 5.60L4.46 3.36L6.70 4.46Z" fill="#ffd000"/><circle cx="7.5" cy="6.4" r="1.05" fill="#fff"/></svg>
<div class="t" style="left:262px;top:468px;font-size:13px;">Спланирован</div>
<div class="t" style="left:449px;top:468px;font-size:13px;">18.10.2019 15:50:28</div>
<div class="t" style="left:616px;top:468px;font-size:13px;">000000027</div>
<div class="t" style="left:723px;top:468px;font-size:13px;">МИР ООО</div>
<div class="a" style="left:230px;top:490px;width:745px;height:28px;background:#ffffff"></div>
<div class="a" style="left:230px;top:518px;width:745px;height:1px;background:#e6e6e6"></div>
<svg class="a" style="left:234px;top:493px;" width="22" height="22" viewBox="0 0 22 22"><path d="M6.5 4.5H14.5L17.5 7.5V17.5H6.5Z" fill="url(#pg)"/><path d="M8.5 6.5H12.5M8.5 8.5H12.5" stroke="#c4ccd4" stroke-width="1"/><path d="M8.5 11.5H15.5M8.5 13.5H15.5M8.5 15.5H15.5" stroke="#a9b9c9" stroke-width="1"/><path d="M6.5 17.5V4.5H14.5" stroke="#7d80c8" stroke-width="1" fill="none"/><path d="M17.5 7.5V17.5" stroke="#2e2e2e" stroke-width="1"/><path d="M6.5 17.5H17.5" stroke="#3b8880" stroke-width="1"/><path d="M14.5 4.5V7.5H17.5Z" fill="#a7c0cc"/><path d="M14.5 4.5L17.5 7.5" stroke="#8a9cd0" stroke-width="1"/><circle cx="8.5" cy="7.4" r="4.3" fill="#fff" stroke="#22b81c" stroke-width="1.2"/><path d="M8.5 3.8V8M6.2 7.5H10.2" stroke="#1a6a10" stroke-width="1.1"/></svg>
<div class="t" style="left:262px;top:497px;font-size:13px;">В отбор</div>
<div class="t" style="left:449px;top:497px;font-size:13px;">22.10.2019 14:05:26</div>
<div class="t" style="left:616px;top:497px;font-size:13px;">000000028</div>
<div class="t" style="left:723px;top:497px;font-size:13px;">Лето ООО</div>
<div class="a" style="left:230px;top:519px;width:745px;height:28px;background:#98fb98"></div>
<div class="a" style="left:230px;top:547px;width:745px;height:1px;background:#e6e6e6"></div>
<svg class="a" style="left:234px;top:522px;" width="22" height="22" viewBox="0 0 22 22"><path d="M6.5 4.5H14.5L17.5 7.5V17.5H6.5Z" fill="url(#pg)"/><path d="M8.5 6.5H12.5M8.5 8.5H12.5" stroke="#c4ccd4" stroke-width="1"/><path d="M8.5 11.5H15.5M8.5 13.5H15.5M8.5 15.5H15.5" stroke="#a9b9c9" stroke-width="1"/><path d="M6.5 17.5V4.5H14.5" stroke="#7d80c8" stroke-width="1" fill="none"/><path d="M17.5 7.5V17.5" stroke="#2e2e2e" stroke-width="1"/><path d="M6.5 17.5H17.5" stroke="#3b8880" stroke-width="1"/><path d="M14.5 4.5V7.5H17.5Z" fill="#a7c0cc"/><path d="M14.5 4.5L17.5 7.5" stroke="#8a9cd0" stroke-width="1"/><path d="M4.3 5.3L6.3 3.3L12.8 9.8V12.2H10.4Z" fill="#48c030" stroke="#1f6e1a" stroke-width="0.8" stroke-linejoin="round"/><path d="M5.5 4.8L11.5 10.8" stroke="#b8f0a0" stroke-width="0.8"/></svg>
<div class="t" style="left:262px;top:526px;font-size:13px;">В отборе</div>
<div class="t" style="left:449px;top:526px;font-size:13px;">22.10.2019 14:51:26</div>
<div class="t" style="left:616px;top:526px;font-size:13px;">000000030</div>
<div class="t" style="left:723px;top:526px;font-size:13px;">Лидер ООО</div>
<svg class="a" style="left:584px;top:149px;" width="11" height="12" viewBox="0 0 11 12"><path d="M5.5 1V10.5" stroke="#404040" stroke-width="1.3"/><path d="M3 8L5.5 10.6L8 8" stroke="#404040" stroke-width="1.5" fill="none"/></svg>
<div class="a" style="left:230px;top:172px;width:177px;height:26px;border:2px solid #9fb0b0"></div>
<div class="a" style="left:239px;top:555px;width:0;height:0;border-top:3px solid transparent;border-bottom:3px solid transparent;border-right:4px solid #c8c8c8"></div>
<div class="sb" style="left:253px;top:554px;width:584px"></div>
<div class="sbt" style="left:253px;top:554px;width:301px"></div>
<div class="a" style="left:847px;top:555px;width:0;height:0;border-top:3px solid transparent;border-bottom:3px solid transparent;border-left:4px solid #444"></div>
<div class="a" style="left:879px;top:548px;width:97px;height:22px;border:1px solid #a6a6a6;background:#fff"></div>
<svg class="a" style="left:887px;top:556px;" width="10" height="8" viewBox="0 0 10 8"><rect x="0.5" y="0" width="9" height="1.3" fill="#aaaaaa"/><path d="M5 1.6L9.5 6H0.5z" fill="#aaaaaa"/></svg>
<div class="a" style="left:903px;top:548px;width:1px;height:22px;background:#a6a6a6"></div>
<svg class="a" style="left:911px;top:556px;" width="10" height="8" viewBox="0 0 10 8"><path d="M5 1L9.5 6h-9z" fill="#aaaaaa"/></svg>
<div class="a" style="left:928px;top:549px;width:23px;height:20px;background:linear-gradient(#fff,#eeeeee)"></div>
<div class="a" style="left:927px;top:548px;width:1px;height:22px;background:#a6a6a6"></div>
<svg class="a" style="left:935px;top:556px;" width="10" height="8" viewBox="0 0 10 8"><path d="M5 6L9.5 1h-9z" fill="#333"/></svg>
<div class="a" style="left:952px;top:549px;width:23px;height:20px;background:linear-gradient(#fff,#eeeeee)"></div>
<div class="a" style="left:951px;top:548px;width:1px;height:22px;background:#a6a6a6"></div>
<svg class="a" style="left:959px;top:556px;" width="10" height="8" viewBox="0 0 10 8"><path d="M5 5.6L9.5 1h-9z" fill="#333"/><rect x="0.5" y="5.8" width="9" height="1.3" fill="#333"/></svg>
<div class="dash" style="left:229px;top:574px;width:747px"></div>
<div class="vdash" style="left:980px;top:139px;height:706px"></div>
<div class="ttl" style="left:229px;top:580px">Связанные документы</div>
<div class="a" style="left:229px;top:601px;width:747px;height:216px;border:1px solid #a6a6a6;background:#fff"></div>
<div class="a" style="left:236px;top:603px;width:21px;height:26px;background:#f3f3f3"></div>
<div class="a" style="left:241px;top:613px;width:1.5px;height:13px;background:#a8a8a8"></div>
<div class="a" style="left:241px;top:612.5px;width:13px;height:1.5px;background:#a8a8a8"></div>
<svg class="a" style="left:257px;top:605px;overflow:visible" width="20" height="21" viewBox="-1 0 20 21"><path d="M2.5 0.5H10.5L14.5 4.5V18.5Q14.5 19.5 13.5 19.5H2.5Q1.5 19.5 1.5 18.5V1.5Q1.5 0.5 2.5 0.5Z" fill="url(#pg2)" stroke="#9fb4c8" stroke-width="1"/><path d="M10.5 0.5V4.5H14.5" fill="#d2dee8" stroke="#9fb4c8" stroke-width="1"/><path d="M3.5 3.5H8M3.5 5.5H8" stroke="#c4ccd4" stroke-width="1"/><path d="M3.5 9.5H12.5M3.5 11.5H12.5M3.5 13.5H12.5M3.5 15.5H12.5" stroke="#a4b6c8" stroke-width="1"/><path d="M2.20 -1.40L2.97 0.95L5.17 -0.17L4.05 2.03L6.40 2.80L4.05 3.57L5.17 5.77L2.97 4.65L2.20 7.00L1.43 4.65L-0.77 5.77L0.35 3.57L-2.00 2.80L0.35 2.03L-0.77 -0.17L1.43 0.95Z" fill="#ffd000"/><circle cx="2.2" cy="2.8" r="1.00" fill="#fff"/></svg>
<div class="t" style="left:286px;top:609px;font-size:14px;color:#333;letter-spacing:0.26px;">Рейс 000000001 от 27.07.2019 23:51:44</div>
<svg class="a" style="left:232px;top:629px;overflow:visible" width="20" height="21" viewBox="-1 0 20 21"><path d="M2.5 0.5H10.5L14.5 4.5V18.5Q14.5 19.5 13.5 19.5H2.5Q1.5 19.5 1.5 18.5V1.5Q1.5 0.5 2.5 0.5Z" fill="url(#pg2)" stroke="#9fb4c8" stroke-width="1"/><path d="M10.5 0.5V4.5H14.5" fill="#d2dee8" stroke="#9fb4c8" stroke-width="1"/><path d="M3.5 3.5H8M3.5 5.5H8" stroke="#c4ccd4" stroke-width="1"/><path d="M3.5 9.5H12.5M3.5 11.5H12.5M3.5 13.5H12.5M3.5 15.5H12.5" stroke="#a4b6c8" stroke-width="1"/><path d="M2.20 -1.40L2.97 0.95L5.17 -0.17L4.05 2.03L6.40 2.80L4.05 3.57L5.17 5.77L2.97 4.65L2.20 7.00L1.43 4.65L-0.77 5.77L0.35 3.57L-2.00 2.80L0.35 2.03L-0.77 -0.17L1.43 0.95Z" fill="#ffd000"/><circle cx="2.2" cy="2.8" r="1.00" fill="#fff"/></svg>
<div class="t" style="left:258px;top:634px;font-size:14px;color:#333;font-weight:bold;letter-spacing:0.17px;">Заказ на отгрузку 000000003 от 27.07.2019 23:03:45</div>
<svg class="a" style="left:257px;top:655px;overflow:visible" width="20" height="21" viewBox="-1 0 20 21"><path d="M2.5 0.5H10.5L14.5 4.5V18.5Q14.5 19.5 13.5 19.5H2.5Q1.5 19.5 1.5 18.5V1.5Q1.5 0.5 2.5 0.5Z" fill="url(#pg2)" stroke="#9fb4c8" stroke-width="1"/><path d="M10.5 0.5V4.5H14.5" fill="#d2dee8" stroke="#9fb4c8" stroke-width="1"/><path d="M3.5 4H8.5" stroke="#c8c8c8" stroke-width="1.6"/><path d="M3.5 6.5H8" stroke="#6a7a8a" stroke-width="1"/><path d="M3.5 8.5H12.5M3.5 10.5H12.5" stroke="#a8b8c8" stroke-width="1"/><path d="M3.5 13.5H12.5" stroke="#5a7090" stroke-width="1"/><path d="M3.5 16H12.5" stroke="#9aacbf" stroke-width="1.6"/></svg>
<div class="t" style="left:286px;top:659px;font-size:14px;color:#333;letter-spacing:0.26px;">EUR00000000002</div>
<svg class="a" style="left:257px;top:680px;overflow:visible" width="20" height="21" viewBox="-1 0 20 21"><path d="M2.5 0.5H10.5L14.5 4.5V18.5Q14.5 19.5 13.5 19.5H2.5Q1.5 19.5 1.5 18.5V1.5Q1.5 0.5 2.5 0.5Z" fill="url(#pg2)" stroke="#9fb4c8" stroke-width="1"/><path d="M10.5 0.5V4.5H14.5" fill="#d2dee8" stroke="#9fb4c8" stroke-width="1"/><path d="M3.5 3.5H8M3.5 5.5H8" stroke="#c4ccd4" stroke-width="1"/><path d="M3.5 9.5H12.5M3.5 11.5H12.5M3.5 13.5H12.5M3.5 15.5H12.5" stroke="#a4b6c8" stroke-width="1"/><path d="M8.2 14.5L11.8 18L16.9 12.6" stroke="#1aa52a" stroke-width="2.6" fill="none"/></svg>
<div class="t" style="left:286px;top:684px;font-size:14px;color:#333;letter-spacing:0.26px;">Отбор товара 00000000004 от 27.07.2019 23:09:00</div>
<svg class="a" style="left:257px;top:705px;overflow:visible" width="20" height="21" viewBox="-1 0 20 21"><path d="M2.5 0.5H10.5L14.5 4.5V18.5Q14.5 19.5 13.5 19.5H2.5Q1.5 19.5 1.5 18.5V1.5Q1.5 0.5 2.5 0.5Z" fill="url(#pg2)" stroke="#9fb4c8" stroke-width="1"/><path d="M10.5 0.5V4.5H14.5" fill="#d2dee8" stroke="#9fb4c8" stroke-width="1"/><path d="M3.5 3.5H8M3.5 5.5H8" stroke="#c4ccd4" stroke-width="1"/><path d="M3.5 9.5H12.5M3.5 11.5H12.5M3.5 13.5H12.5M3.5 15.5H12.5" stroke="#a4b6c8" stroke-width="1"/><circle cx="3.1" cy="4.3" r="4.6" fill="#fff" stroke="#ffaa40" stroke-width="1.3"/><path d="M3.1 0.9V5M0.9 4.8H5.2" stroke="#9a6a10" stroke-width="1.1"/></svg>
<div class="t" style="left:286px;top:709px;font-size:14px;color:#333;letter-spacing:0.26px;">Отбор товара 00000000005 от 27.07.2019 23:18:25</div>
<svg class="a" style="left:257px;top:730px;overflow:visible" width="20" height="21" viewBox="-1 0 20 21"><path d="M2.5 0.5H10.5L14.5 4.5V18.5Q14.5 19.5 13.5 19.5H2.5Q1.5 19.5 1.5 18.5V1.5Q1.5 0.5 2.5 0.5Z" fill="url(#pg2)" stroke="#9fb4c8" stroke-width="1"/><path d="M10.5 0.5V4.5H14.5" fill="#d2dee8" stroke="#9fb4c8" stroke-width="1"/><path d="M3.5 3.5H8M3.5 5.5H8" stroke="#c4ccd4" stroke-width="1"/><path d="M3.5 9.5H12.5M3.5 11.5H12.5M3.5 13.5H12.5M3.5 15.5H12.5" stroke="#a4b6c8" stroke-width="1"/><circle cx="3.1" cy="4.3" r="4.6" fill="#fff" stroke="#22b81c" stroke-width="1.3"/><path d="M3.1 0.9V5M0.9 4.8H5.2" stroke="#1a6a10" stroke-width="1.1"/></svg>
<div class="t" style="left:286px;top:734px;font-size:14px;color:#333;letter-spacing:0.26px;">Задача по перемещению товара 00000000006 от 27.07.2019 23:18:57</div>
<div class="a" style="left:241px;top:653px;width:2px;height:23px;background:#d4d4d4"></div>
<div class="a" style="left:242px;top:663px;width:12px;height:1px;background:#bdbdbd"></div>
<div class="a" style="left:255px;top:665px;width:3px;height:1px;background:#d8d8d8"></div>
<div class="a" style="left:241px;top:678px;width:2px;height:23px;background:#d4d4d4"></div>
<div class="a" style="left:242px;top:688px;width:12px;height:1px;background:#bdbdbd"></div>
<div class="a" style="left:255px;top:690px;width:3px;height:1px;background:#d8d8d8"></div>
<div class="a" style="left:241px;top:703px;width:2px;height:23px;background:#d4d4d4"></div>
<div class="a" style="left:242px;top:713px;width:12px;height:1px;background:#bdbdbd"></div>
<div class="a" style="left:255px;top:715px;width:3px;height:1px;background:#d8d8d8"></div>
<div class="a" style="left:241px;top:728px;width:2px;height:11px;background:#d4d4d4"></div>
<div class="a" style="left:242px;top:738px;width:12px;height:1px;background:#bdbdbd"></div>
<div class="a" style="left:255px;top:740px;width:3px;height:1px;background:#d8d8d8"></div>
<div class="a" style="left:965px;top:611px;width:0;height:0;border-left:3px solid transparent;border-right:3px solid transparent;border-bottom:3px solid #c8c8c8"></div>
<div class="a" style="left:964px;top:625px;width:8px;height:155px;border-radius:4px;background:#d3d3d3"></div>
<div class="a" style="left:964px;top:625px;width:8px;height:103px;border-radius:4px;background:#9c9c9c"></div>
<div class="a" style="left:965px;top:789px;width:0;height:0;border-left:3px solid transparent;border-right:3px solid transparent;border-top:3px solid #444"></div>
<div class="a" style="left:239px;top:806px;width:0;height:0;border-top:3px solid transparent;border-bottom:3px solid transparent;border-right:4px solid #c8c8c8"></div>
<div class="sb" style="left:253px;top:804px;width:685px"></div>
<div class="sbt" style="left:253px;top:804px;width:501px"></div>
<div class="a" style="left:948px;top:806px;width:0;height:0;border-top:3px solid transparent;border-bottom:3px solid transparent;border-left:4px solid #444"></div>
<div class="a" style="left:230px;top:827px;width:15px;height:15px;border:1px solid #8c8c8c;border-radius:3px;background:#fff"></div>
<div class="t" style="left:251px;top:828px;font-size:12.7px;color:#4a4a4a;">Не отображать связанные элементы</div>
<div class="ttl" style="left:986px;top:140px">Волны отбора</div>
<div class="btn" style="left:986px;top:161px;width:77px">Создать</div>
<div class="btn" style="left:1072px;top:161px;width:30px"></div>
<svg class="a" style="left:1080px;top:167px;" width="14" height="16" viewBox="0 0 14 16"><path d="M1.7 1.7H7.7L10.8 4.8V14.2H1.7Z" fill="#fff" stroke="#5c7191" stroke-width="1"/><path d="M7.7 1.7V4.8H10.8" fill="#fff" stroke="#5c7191" stroke-width="1"/><circle cx="4" cy="11" r="4.4" fill="#1f9a35"/><path d="M4 8.4V13.6M1.4 11H6.6" stroke="#fff" stroke-width="1.5"/></svg>
<div class="btn" style="left:1111px;top:161px;width:76px">Найти...</div>
<div class="btn dis" style="left:1195px;top:161px;width:124px">Отменить поиск</div>
<div class="btn" style="left:1327px;top:161px;width:141px"><span class="t" style="left:12px;top:0">Установить статус</span><div class="dd" style="left:127px"></div></div>
<div class="btn" style="left:1477px;top:161px;width:42px"></div>
<svg class="a" style="left:1484px;top:165px;" width="18" height="18" viewBox="0 0 18 18"><rect x="1.5" y="2.7" width="11" height="12.5" fill="#fff" stroke="#a83c22" stroke-width="1"/><path d="M1.5 15.2H12.5" stroke="#5a2020" stroke-width="1"/><rect x="3.5" y="1.8" width="7" height="2.6" fill="#9a9a9a"/><path d="M4.5 7.2H5M4.5 9.2H5M4.5 11.2H5" stroke="#888"/><path d="M6.5 7.2H11M6.5 9.2H11M6.5 11.2H11" stroke="#b8b8b8"/><path d="M8.2 13.5L10.6 16L15.3 11" stroke="#17b517" stroke-width="2.6" fill="none"/></svg>
<div class="dd" style="left:1506px;top:174px"></div>
<div class="btn" style="left:1636px;top:161px;width:60px"><span class="t" style="left:14px;top:0">Еще</span><div class="dd" style="left:46px"></div></div>
<div class="grid" style="left:986px;top:196px;width:710px;height:151px">
<div class="hdr"></div>
<div class="hcell" style="left:0px;width:266px"></div>
<div class="hcell" style="left:267px;width:166px"></div>
<div class="hcell" style="left:434px;width:106px"></div>
<div class="hcell" style="left:541px;width:167px"></div>
<div class="hc" style="left:0px">Статус</div>
<div class="hs" style="left:266px"></div>
<div class="hc" style="left:267px">Дата</div>
<div class="hs" style="left:433px"></div>
<div class="hc" style="left:434px">Номер</div>
<div class="hs" style="left:540px"></div>
<div class="hc" style="left:541px">Дата отгрузки</div>
</div>
<svg class="a" style="left:1397px;top:205px;" width="11" height="12" viewBox="0 0 11 12"><path d="M5.5 1V10.5" stroke="#404040" stroke-width="1.3"/><path d="M3 8L5.5 10.6L8 8" stroke="#404040" stroke-width="1.5" fill="none"/></svg>
<div class="a" style="left:987px;top:228px;width:708px;height:28px;background:#fff"></div>
<div class="a" style="left:987px;top:256px;width:708px;height:1px;background:#e6e6e6"></div>
<svg class="a" style="left:991px;top:231px;" width="22" height="22" viewBox="0 0 22 22"><path d="M6.5 4.5H14.5L17.5 7.5V17.5H6.5Z" fill="url(#pg)"/><path d="M8.5 6.5H12.5M8.5 8.5H12.5" stroke="#c4ccd4" stroke-width="1"/><path d="M8.5 11.5H15.5M8.5 13.5H15.5M8.5 15.5H15.5" stroke="#a9b9c9" stroke-width="1"/><path d="M6.5 17.5V4.5H14.5" stroke="#7d80c8" stroke-width="1" fill="none"/><path d="M17.5 7.5V17.5" stroke="#2e2e2e" stroke-width="1"/><path d="M6.5 17.5H17.5" stroke="#3b8880" stroke-width="1"/><path d="M14.5 4.5V7.5H17.5Z" fill="#a7c0cc"/><path d="M14.5 4.5L17.5 7.5" stroke="#8a9cd0" stroke-width="1"/><path d="M7.50 2.10L8.30 4.46L10.54 3.36L9.44 5.60L11.80 6.40L9.44 7.20L10.54 9.44L8.30 8.34L7.50 10.70L6.70 8.34L4.46 9.44L5.56 7.20L3.20 6.40L5.56 5.60L4.46 3.36L6.70 4.46Z" fill="#ffd000"/><circle cx="7.5" cy="6.4" r="1.05" fill="#fff"/></svg>
<div class="t" style="left:1019px;top:235px;font-size:13px;">Спланирована</div>
<div class="t" style="left:1262px;top:235px;font-size:13px;">27.07.2020 14:06:24</div>
<div class="t" style="left:1429px;top:235px;font-size:13px;">000000001</div>
<div class="a" style="left:987px;top:257px;width:708px;height:28px;background:#fafafa"></div>
<div class="a" style="left:987px;top:257px;width:708px;height:28px;background:#fff"></div>
<div class="a" style="left:987px;top:258px;width:708px;height:26px;background:#fdf1c6"></div>
<div class="a" style="left:987px;top:258px;width:266px;height:26px;background:#fce38f"></div>
<div class="a" style="left:1253px;top:257px;width:1px;height:28px;background:#fff"></div>
<div class="a" style="left:1420px;top:257px;width:1px;height:28px;background:#fff"></div>
<div class="a" style="left:1527px;top:257px;width:1px;height:28px;background:#fff"></div>
<div class="a" style="left:987px;top:285px;width:708px;height:1px;background:#e6e6e6"></div>
<svg class="a" style="left:991px;top:260px;" width="22" height="22" viewBox="0 0 22 22"><path d="M6.5 4.5H14.5L17.5 7.5V17.5H6.5Z" fill="url(#pg)"/><path d="M8.5 6.5H12.5M8.5 8.5H12.5" stroke="#c4ccd4" stroke-width="1"/><path d="M8.5 11.5H15.5M8.5 13.5H15.5M8.5 15.5H15.5" stroke="#a9b9c9" stroke-width="1"/><path d="M6.5 17.5V4.5H14.5" stroke="#7d80c8" stroke-width="1" fill="none"/><path d="M17.5 7.5V17.5" stroke="#2e2e2e" stroke-width="1"/><path d="M6.5 17.5H17.5" stroke="#3b8880" stroke-width="1"/><path d="M14.5 4.5V7.5H17.5Z" fill="#a7c0cc"/><path d="M14.5 4.5L17.5 7.5" stroke="#8a9cd0" stroke-width="1"/><path d="M7.50 2.10L8.30 4.46L10.54 3.36L9.44 5.60L11.80 6.40L9.44 7.20L10.54 9.44L8.30 8.34L7.50 10.70L6.70 8.34L4.46 9.44L5.56 7.20L3.20 6.40L5.56 5.60L4.46 3.36L6.70 4.46Z" fill="#ffd000"/><circle cx="7.5" cy="6.4" r="1.05" fill="#fff"/></svg>
<div class="t" style="left:1019px;top:264px;font-size:13px;">Спланирована</div>
<div class="t" style="left:1262px;top:264px;font-size:13px;">28.07.2020 0:00:00</div>
<div class="t" style="left:1429px;top:264px;font-size:13px;">000000002</div>
<div class="t" style="left:1536px;top:264px;font-size:13px;">29.07.2020 0:00:00</div>
<div class="a" style="left:1599px;top:346px;width:97px;height:22px;border:1px solid #a6a6a6;background:#fff"></div>
<svg class="a" style="left:1607px;top:354px;" width="10" height="8" viewBox="0 0 10 8"><rect x="0.5" y="0" width="9" height="1.3" fill="#aaaaaa"/><path d="M5 1.6L9.5 6H0.5z" fill="#aaaaaa"/></svg>
<div class="a" style="left:1623px;top:346px;width:1px;height:22px;background:#a6a6a6"></div>
<svg class="a" style="left:1631px;top:354px;" width="10" height="8" viewBox="0 0 10 8"><path d="M5 1L9.5 6h-9z" fill="#aaaaaa"/></svg>
<div class="a" style="left:1647px;top:346px;width:1px;height:22px;background:#a6a6a6"></div>
<svg class="a" style="left:1655px;top:354px;" width="10" height="8" viewBox="0 0 10 8"><path d="M5 6L9.5 1h-9z" fill="#aaaaaa"/></svg>
<div class="a" style="left:1671px;top:346px;width:1px;height:22px;background:#a6a6a6"></div>
<svg class="a" style="left:1679px;top:354px;" width="10" height="8" viewBox="0 0 10 8"><path d="M5 5.6L9.5 1h-9z" fill="#aaaaaa"/><rect x="0.5" y="5.8" width="9" height="1.3" fill="#aaaaaa"/></svg>
<div class="dash" style="left:986px;top:373px;width:710px"></div>
<div class="ttl" style="left:986px;top:378px">Рейсы</div>
<div class="btn" style="left:986px;top:399px;width:77px">Создать</div>
<div class="btn" style="left:1072px;top:399px;width:30px"></div>
<svg class="a" style="left:1080px;top:405px;" width="14" height="16" viewBox="0 0 14 16"><path d="M1.7 1.7H7.7L10.8 4.8V14.2H1.7Z" fill="#fff" stroke="#5c7191" stroke-width="1"/><path d="M7.7 1.7V4.8H10.8" fill="#fff" stroke="#5c7191" stroke-width="1"/><circle cx="4" cy="11" r="4.4" fill="#1f9a35"/><path d="M4 8.4V13.6M1.4 11H6.6" stroke="#fff" stroke-width="1.5"/></svg>
<div class="btn" style="left:1111px;top:399px;width:76px">Найти...</div>
<div class="btn dis" style="left:1195px;top:399px;width:124px">Отменить поиск</div>
<div class="btn" style="left:1327px;top:399px;width:141px"><span class="t" style="left:12px;top:0">Установить статус</span><div class="dd" style="left:127px"></div></div>
<div class="btn" style="left:1477px;top:399px;width:42px"></div>
<svg class="a" style="left:1484px;top:403px;" width="18" height="18" viewBox="0 0 18 18"><rect x="1.5" y="2.7" width="11" height="12.5" fill="#fff" stroke="#a83c22" stroke-width="1"/><path d="M1.5 15.2H12.5" stroke="#5a2020" stroke-width="1"/><rect x="3.5" y="1.8" width="7" height="2.6" fill="#9a9a9a"/><path d="M4.5 7.2H5M4.5 9.2H5M4.5 11.2H5" stroke="#888"/><path d="M6.5 7.2H11M6.5 9.2H11M6.5 11.2H11" stroke="#b8b8b8"/><path d="M8.2 13.5L10.6 16L15.3 11" stroke="#17b517" stroke-width="2.6" fill="none"/></svg>
<div class="dd" style="left:1506px;top:412px"></div>
<div class="btn" style="left:1636px;top:399px;width:60px"><span class="t" style="left:14px;top:0">Еще</span><div class="dd" style="left:46px"></div></div>
<div class="grid" style="left:986px;top:434px;width:710px;height:172px">
<div class="hdr"></div>
<div class="hcell" style="left:0px;width:177px"></div>
<div class="hcell" style="left:178px;width:166px"></div>
<div class="hcell" style="left:345px;width:106px"></div>
<div class="hcell" style="left:452px;width:124px"></div>
<div class="hcell" style="left:577px;width:131px"></div>
<div class="hc" style="left:0px">Статус</div>
<div class="hs" style="left:177px"></div>
<div class="hc" style="left:178px">Дата</div>
<div class="hs" style="left:344px"></div>
<div class="hc" style="left:345px">Номер</div>
<div class="hs" style="left:451px"></div>
<div class="hc" style="left:452px">Маршрут</div>
<div class="hs" style="left:576px"></div>
<div class="hc" style="left:577px">План. дата отгрузки</div>
</div>
<svg class="a" style="left:1308px;top:443px;" width="11" height="12" viewBox="0 0 11 12"><path d="M5.5 1V10.5" stroke="#404040" stroke-width="1.3"/><path d="M3 8L5.5 10.6L8 8" stroke="#404040" stroke-width="1.5" fill="none"/></svg>
<div class="a" style="left:987px;top:466px;width:708px;height:28px;background:#fff"></div>
<div class="a" style="left:987px;top:494px;width:708px;height:1px;background:#e6e6e6"></div>
<svg class="a" style="left:991px;top:469px;" width="22" height="22" viewBox="0 0 22 22"><path d="M6.5 4.5H14.5L17.5 7.5V17.5H6.5Z" fill="url(#pg)"/><path d="M8.5 6.5H12.5M8.5 8.5H12.5" stroke="#c4ccd4" stroke-width="1"/><path d="M8.5 11.5H15.5M8.5 13.5H15.5M8.5 15.5H15.5" stroke="#a9b9c9" stroke-width="1"/><path d="M6.5 17.5V4.5H14.5" stroke="#7d80c8" stroke-width="1" fill="none"/><path d="M17.5 7.5V17.5" stroke="#2e2e2e" stroke-width="1"/><path d="M6.5 17.5H17.5" stroke="#3b8880" stroke-width="1"/><path d="M14.5 4.5V7.5H17.5Z" fill="#a7c0cc"/><path d="M14.5 4.5L17.5 7.5" stroke="#8a9cd0" stroke-width="1"/><path d="M15.4 10.4H19.4V11.4L18 14.4L19.4 17.4V18.4H15.4V17.4L16.8 14.4L15.4 11.4Z" fill="#c8f0f4" stroke="#0b2a9e" stroke-width="1.3" stroke-linejoin="round"/></svg>
<div class="t" style="left:1019px;top:473px;font-size:13px;">К планированию</div>
<div class="t" style="left:1173px;top:473px;font-size:13px;">24.10.2019 9:36:16</div>
<div class="t" style="left:1340px;top:473px;font-size:13px;">000000005</div>
<div class="t" style="left:1572px;top:473px;font-size:13px;">24.10.2019 0:00:00</div>
<div class="a" style="left:987px;top:495px;width:708px;height:28px;background:#fafafa"></div>
<div class="a" style="left:987px;top:523px;width:708px;height:1px;background:#e6e6e6"></div>
<svg class="a" style="left:991px;top:498px;" width="22" height="22" viewBox="0 0 22 22"><path d="M6.5 4.5H14.5L17.5 7.5V17.5H6.5Z" fill="url(#pg)"/><path d="M8.5 6.5H12.5M8.5 8.5H12.5" stroke="#c4ccd4" stroke-width="1"/><path d="M8.5 11.5H15.5M8.5 13.5H15.5M8.5 15.5H15.5" stroke="#a9b9c9" stroke-width="1"/><path d="M6.5 17.5V4.5H14.5" stroke="#7d80c8" stroke-width="1" fill="none"/><path d="M17.5 7.5V17.5" stroke="#2e2e2e" stroke-width="1"/><path d="M6.5 17.5H17.5" stroke="#3b8880" stroke-width="1"/><path d="M14.5 4.5V7.5H17.5Z" fill="#a7c0cc"/><path d="M14.5 4.5L17.5 7.5" stroke="#8a9cd0" stroke-width="1"/><path d="M7.50 2.10L8.30 4.46L10.54 3.36L9.44 5.60L11.80 6.40L9.44 7.20L10.54 9.44L8.30 8.34L7.50 10.70L6.70 8.34L4.46 9.44L5.56 7.20L3.20 6.40L5.56 5.60L4.46 3.36L6.70 4.46Z" fill="#ffd000"/><circle cx="7.5" cy="6.4" r="1.05" fill="#fff"/></svg>
<div class="t" style="left:1019px;top:502px;font-size:13px;">Спланирован</div>
<div class="t" style="left:1173px;top:502px;font-size:13px;">24.10.2019 9:37:35</div>
<div class="t" style="left:1340px;top:502px;font-size:13px;">000000006</div>
<div class="t" style="left:1572px;top:502px;font-size:13px;">24.10.2019 0:00:00</div>
<div class="a" style="left:987px;top:524px;width:708px;height:28px;background:#fff"></div>
<div class="a" style="left:987px;top:552px;width:708px;height:1px;background:#e6e6e6"></div>
<svg class="a" style="left:991px;top:527px;" width="22" height="22" viewBox="0 0 22 22"><path d="M6.5 4.5H14.5L17.5 7.5V17.5H6.5Z" fill="url(#pg)"/><path d="M8.5 6.5H12.5M8.5 8.5H12.5" stroke="#c4ccd4" stroke-width="1"/><path d="M8.5 11.5H15.5M8.5 13.5H15.5M8.5 15.5H15.5" stroke="#a9b9c9" stroke-width="1"/><path d="M6.5 17.5V4.5H14.5" stroke="#7d80c8" stroke-width="1" fill="none"/><path d="M17.5 7.5V17.5" stroke="#2e2e2e" stroke-width="1"/><path d="M6.5 17.5H17.5" stroke="#3b8880" stroke-width="1"/><path d="M14.5 4.5V7.5H17.5Z" fill="#a7c0cc"/><path d="M14.5 4.5L17.5 7.5" stroke="#8a9cd0" stroke-width="1"/><path d="M7.50 2.10L8.30 4.46L10.54 3.36L9.44 5.60L11.80 6.40L9.44 7.20L10.54 9.44L8.30 8.34L7.50 10.70L6.70 8.34L4.46 9.44L5.56 7.20L3.20 6.40L5.56 5.60L4.46 3.36L6.70 4.46Z" fill="#ffd000"/><circle cx="7.5" cy="6.4" r="1.05" fill="#fff"/></svg>
<div class="t" style="left:1019px;top:531px;font-size:13px;">Спланирован</div>
<div class="t" style="left:1173px;top:531px;font-size:13px;">24.10.2019 9:44:20</div>
<div class="t" style="left:1340px;top:531px;font-size:13px;">000000007</div>
<div class="t" style="left:1447px;top:531px;font-size:13px;">Ижевск Казань</div>
<div class="t" style="left:1572px;top:531px;font-size:13px;">24.10.2019 0:00:00</div>
<div class="a" style="left:987px;top:553px;width:708px;height:28px;background:#fafafa"></div>
<div class="a" style="left:987px;top:553px;width:708px;height:28px;background:#fff"></div>
<div class="a" style="left:987px;top:554px;width:708px;height:26px;background:#fdf1c6"></div>
<div class="a" style="left:987px;top:554px;width:177px;height:26px;background:#fce38f"></div>
<div class="a" style="left:1164px;top:553px;width:1px;height:28px;background:#fff"></div>
<div class="a" style="left:1331px;top:553px;width:1px;height:28px;background:#fff"></div>
<div class="a" style="left:1438px;top:553px;width:1px;height:28px;background:#fff"></div>
<div class="a" style="left:1563px;top:553px;width:1px;height:28px;background:#fff"></div>
<div class="a" style="left:987px;top:581px;width:708px;height:1px;background:#e6e6e6"></div>
<svg class="a" style="left:991px;top:556px;" width="22" height="22" viewBox="0 0 22 22"><path d="M6.5 4.5H14.5L17.5 7.5V17.5H6.5Z" fill="url(#pg)"/><path d="M8.5 6.5H12.5M8.5 8.5H12.5" stroke="#c4ccd4" stroke-width="1"/><path d="M8.5 11.5H15.5M8.5 13.5H15.5M8.5 15.5H15.5" stroke="#a9b9c9" stroke-width="1"/><path d="M6.5 17.5V4.5H14.5" stroke="#7d80c8" stroke-width="1" fill="none"/><path d="M17.5 7.5V17.5" stroke="#2e2e2e" stroke-width="1"/><path d="M6.5 17.5H17.5" stroke="#3b8880" stroke-width="1"/><path d="M14.5 4.5V7.5H17.5Z" fill="#a7c0cc"/><path d="M14.5 4.5L17.5 7.5" stroke="#8a9cd0" stroke-width="1"/></svg>
<div class="t" style="left:1019px;top:560px;font-size:13px;">Новый</div>
<div class="t" style="left:1173px;top:560px;font-size:13px;">27.07.2020 0:00:00</div>
<div class="t" style="left:1340px;top:560px;font-size:13px;">000000008</div>
<div class="t" style="left:1572px;top:560px;font-size:13px;">27.07.2020 0:00:00</div>
<div class="a" style="left:1599px;top:583px;width:97px;height:22px;border:1px solid #a6a6a6;background:#fff"></div>
<div class="a" style="left:1600px;top:584px;width:23px;height:20px;background:linear-gradient(#fff,#eeeeee)"></div>
<svg class="a" style="left:1607px;top:591px;" width="10" height="8" viewBox="0 0 10 8"><rect x="0.5" y="0" width="9" height="1.3" fill="#333"/><path d="M5 1.6L9.5 6H0.5z" fill="#333"/></svg>
<div class="a" style="left:1624px;top:584px;width:23px;height:20px;background:linear-gradient(#fff,#eeeeee)"></div>
<div class="a" style="left:1623px;top:583px;width:1px;height:22px;background:#a6a6a6"></div>
<svg class="a" style="left:1631px;top:591px;" width="10" height="8" viewBox="0 0 10 8"><path d="M5 1L9.5 6h-9z" fill="#333"/></svg>
<div class="a" style="left:1647px;top:583px;width:1px;height:22px;background:#a6a6a6"></div>
<svg class="a" style="left:1655px;top:591px;" width="10" height="8" viewBox="0 0 10 8"><path d="M5 6L9.5 1h-9z" fill="#aaaaaa"/></svg>
<div class="a" style="left:1671px;top:583px;width:1px;height:22px;background:#a6a6a6"></div>
<svg class="a" style="left:1679px;top:591px;" width="10" height="8" viewBox="0 0 10 8"><path d="M5 5.6L9.5 1h-9z" fill="#aaaaaa"/><rect x="0.5" y="5.8" width="9" height="1.3" fill="#aaaaaa"/></svg>
<div class="a" style="left:997px;top:591px;width:0;height:0;border-top:3px solid transparent;border-bottom:3px solid transparent;border-right:4px solid #c8c8c8"></div>
<div class="sb" style="left:1010px;top:590px;width:548px"></div>
<div class="sbt" style="left:1010px;top:590px;width:445px"></div>
<div class="a" style="left:1568px;top:591px;width:0;height:0;border-top:3px solid transparent;border-bottom:3px solid transparent;border-left:4px solid #444"></div>
<div class="dash" style="left:986px;top:611px;width:710px"></div>
<div class="ttl" style="left:986px;top:616px">Группы отбора</div>
<div class="btn" style="left:986px;top:637px;width:77px">Создать</div>
<div class="btn" style="left:1072px;top:637px;width:30px"></div>
<svg class="a" style="left:1080px;top:643px;" width="14" height="16" viewBox="0 0 14 16"><path d="M1.7 1.7H7.7L10.8 4.8V14.2H1.7Z" fill="#fff" stroke="#5c7191" stroke-width="1"/><path d="M7.7 1.7V4.8H10.8" fill="#fff" stroke="#5c7191" stroke-width="1"/><circle cx="4" cy="11" r="4.4" fill="#1f9a35"/><path d="M4 8.4V13.6M1.4 11H6.6" stroke="#fff" stroke-width="1.5"/></svg>
<div class="btn" style="left:1111px;top:637px;width:76px">Найти...</div>
<div class="btn dis" style="left:1195px;top:637px;width:124px">Отменить поиск</div>
<div class="btn" style="left:1327px;top:637px;width:141px"><span class="t" style="left:12px;top:0">Установить статус</span><div class="dd" style="left:127px"></div></div>
<div class="btn" style="left:1477px;top:637px;width:42px"></div>
<svg class="a" style="left:1484px;top:641px;" width="18" height="18" viewBox="0 0 18 18"><rect x="1.5" y="2.7" width="11" height="12.5" fill="#fff" stroke="#a83c22" stroke-width="1"/><path d="M1.5 15.2H12.5" stroke="#5a2020" stroke-width="1"/><rect x="3.5" y="1.8" width="7" height="2.6" fill="#9a9a9a"/><path d="M4.5 7.2H5M4.5 9.2H5M4.5 11.2H5" stroke="#888"/><path d="M6.5 7.2H11M6.5 9.2H11M6.5 11.2H11" stroke="#b8b8b8"/><path d="M8.2 13.5L10.6 16L15.3 11" stroke="#17b517" stroke-width="2.6" fill="none"/></svg>
<div class="dd" style="left:1506px;top:650px"></div>
<div class="btn" style="left:1636px;top:637px;width:60px"><span class="t" style="left:14px;top:0">Еще</span><div class="dd" style="left:46px"></div></div>
<div class="grid" style="left:986px;top:672px;width:710px;height:150px">
<div class="hdr"></div>
<div class="hcell" style="left:0px;width:254px"></div>
<div class="hcell" style="left:255px;width:166px"></div>
<div class="hcell" style="left:422px;width:106px"></div>
<div class="hcell" style="left:529px;width:179px"></div>
<div class="hc" style="left:0px">Статус</div>
<div class="hs" style="left:254px"></div>
<div class="hc" style="left:255px">Дата</div>
<div class="hs" style="left:421px"></div>
<div class="hc" style="left:422px">Номер</div>
<div class="hs" style="left:528px"></div>
<div class="hc" style="left:529px">Зона сортировки</div>
</div>
<svg class="a" style="left:1385px;top:681px;" width="11" height="12" viewBox="0 0 11 12"><path d="M5.5 1V10.5" stroke="#404040" stroke-width="1.3"/><path d="M3 8L5.5 10.6L8 8" stroke="#404040" stroke-width="1.5" fill="none"/></svg>
<div class="a" style="left:987px;top:704px;width:708px;height:28px;background:#fff"></div>
<div class="a" style="left:987px;top:732px;width:708px;height:1px;background:#e6e6e6"></div>
<svg class="a" style="left:991px;top:707px;" width="22" height="22" viewBox="0 0 22 22"><path d="M6.5 4.5H14.5L17.5 7.5V17.5H6.5Z" fill="url(#pg)"/><path d="M8.5 6.5H12.5M8.5 8.5H12.5" stroke="#c8d0d6" stroke-width="1"/><path d="M8.5 11.5H15.5M8.5 13.5H15.5M8.5 15.5H15.5" stroke="#a9b9c9" stroke-width="1"/><path d="M14.5 4.5H6.5V17.5H17.5V7.5Z" stroke="#8fa6b8" stroke-width="1" fill="none" stroke-linejoin="round"/><path d="M14.5 4.5V7.5H17.5Z" fill="#b8c8d4"/><path d="M7.50 2.10L8.30 4.46L10.54 3.36L9.44 5.60L11.80 6.40L9.44 7.20L10.54 9.44L8.30 8.34L7.50 10.70L6.70 8.34L4.46 9.44L5.56 7.20L3.20 6.40L5.56 5.60L4.46 3.36L6.70 4.46Z" fill="#e00000"/><circle cx="7.5" cy="6.4" r="1.05" fill="#fff"/></svg>
<div class="t" style="left:1019px;top:711px;font-size:13px;">Спланирована частично</div>
<div class="t" style="left:1250px;top:711px;font-size:13px;">17.10.2019 13:27:17</div>
<div class="t" style="left:1417px;top:711px;font-size:13px;">000000006</div>
<div class="a" style="left:987px;top:733px;width:708px;height:28px;background:#fafafa"></div>
<div class="a" style="left:987px;top:761px;width:708px;height:1px;background:#e6e6e6"></div>
<svg class="a" style="left:991px;top:736px;" width="22" height="22" viewBox="0 0 22 22"><path d="M6.5 4.5H14.5L17.5 7.5V17.5H6.5Z" fill="url(#pg)"/><path d="M8.5 6.5H12.5M8.5 8.5H12.5" stroke="#c8d0d6" stroke-width="1"/><path d="M8.5 11.5H15.5M8.5 13.5H15.5M8.5 15.5H15.5" stroke="#a9b9c9" stroke-width="1"/><path d="M14.5 4.5H6.5V17.5H17.5V7.5Z" stroke="#8fa6b8" stroke-width="1" fill="none" stroke-linejoin="round"/><path d="M14.5 4.5V7.5H17.5Z" fill="#b8c8d4"/><path d="M4.8 3.8L10 9M10 3.8L4.8 9" stroke="#d02a1a" stroke-width="2.2"/></svg>
<div class="t" style="left:1019px;top:740px;font-size:13px;">Отменена</div>
<div class="t" style="left:1250px;top:740px;font-size:13px;">17.10.2019 14:44:40</div>
<div class="t" style="left:1417px;top:740px;font-size:13px;">000000007</div>
<div class="a" style="left:987px;top:762px;width:708px;height:28px;background:#fff"></div>
<div class="a" style="left:987px;top:790px;width:708px;height:1px;background:#e6e6e6"></div>
<svg class="a" style="left:991px;top:765px;" width="22" height="22" viewBox="0 0 22 22"><path d="M6.5 4.5H14.5L17.5 7.5V17.5H6.5Z" fill="url(#pg)"/><path d="M8.5 6.5H12.5M8.5 8.5H12.5" stroke="#c8d0d6" stroke-width="1"/><path d="M8.5 11.5H15.5M8.5 13.5H15.5M8.5 15.5H15.5" stroke="#a9b9c9" stroke-width="1"/><path d="M14.5 4.5H6.5V17.5H17.5V7.5Z" stroke="#8fa6b8" stroke-width="1" fill="none" stroke-linejoin="round"/><path d="M14.5 4.5V7.5H17.5Z" fill="#b8c8d4"/><path d="M7.50 2.10L8.30 4.46L10.54 3.36L9.44 5.60L11.80 6.40L9.44 7.20L10.54 9.44L8.30 8.34L7.50 10.70L6.70 8.34L4.46 9.44L5.56 7.20L3.20 6.40L5.56 5.60L4.46 3.36L6.70 4.46Z" fill="#ffd000"/><circle cx="7.5" cy="6.4" r="1.05" fill="#fff"/></svg>
<div class="t" style="left:1019px;top:769px;font-size:13px;">Спланирована</div>
<div class="t" style="left:1250px;top:769px;font-size:13px;">17.10.2019 15:16:27</div>
<div class="t" style="left:1417px;top:769px;font-size:13px;">000000008</div>
<div class="a" style="left:987px;top:791px;width:708px;height:28px;background:#fafafa"></div>
<div class="a" style="left:987px;top:791px;width:708px;height:28px;background:#fff"></div>
<div class="a" style="left:987px;top:792px;width:708px;height:26px;background:#fdf1c6"></div>
<div class="a" style="left:987px;top:792px;width:254px;height:26px;background:#fce38f"></div>
<div class="a" style="left:1241px;top:791px;width:1px;height:28px;background:#fff"></div>
<div class="a" style="left:1408px;top:791px;width:1px;height:28px;background:#fff"></div>
<div class="a" style="left:1515px;top:791px;width:1px;height:28px;background:#fff"></div>
<div class="a" style="left:987px;top:819px;width:708px;height:1px;background:#e6e6e6"></div>
<svg class="a" style="left:991px;top:794px;" width="22" height="22" viewBox="0 0 22 22"><path d="M6.5 4.5H14.5L17.5 7.5V17.5H6.5Z" fill="url(#pg)"/><path d="M8.5 6.5H12.5M8.5 8.5H12.5" stroke="#c8d0d6" stroke-width="1"/><path d="M8.5 11.5H15.5M8.5 13.5H15.5M8.5 15.5H15.5" stroke="#a9b9c9" stroke-width="1"/><path d="M14.5 4.5H6.5V17.5H17.5V7.5Z" stroke="#8fa6b8" stroke-width="1" fill="none" stroke-linejoin="round"/><path d="M14.5 4.5V7.5H17.5Z" fill="#b8c8d4"/><rect x="14.5" y="12" width="1.6" height="2.5" fill="#2a50c8"/><path d="M10.3 14.2H19.8L18.8 18.8H11.3Z" fill="#2f5ad8" stroke="#0f2a90" stroke-width="0.6"/><path d="M12.5 15.5h.8M14.5 15.5h.8M17 15.5h.8M12.5 17.5h.8M14.5 17.5h.8M17 17.5h.8" stroke="#fff" stroke-width="1.1"/></svg>
<div class="t" style="left:1019px;top:798px;font-size:13px;">Отобрана</div>
<div class="t" style="left:1250px;top:798px;font-size:13px;">17.10.2019 15:37:26</div>
<div class="t" style="left:1417px;top:798px;font-size:13px;">000000010</div>
<div class="a" style="left:1599px;top:821px;width:97px;height:22px;border:1px solid #a6a6a6;background:#fff"></div>
<div class="a" style="left:1600px;top:822px;width:23px;height:20px;background:linear-gradient(#fff,#eeeeee)"></div>
<svg class="a" style="left:1607px;top:829px;" width="10" height="8" viewBox="0 0 10 8"><rect x="0.5" y="0" width="9" height="1.3" fill="#333"/><path d="M5 1.6L9.5 6H0.5z" fill="#333"/></svg>
<div class="a" style="left:1624px;top:822px;width:23px;height:20px;background:linear-gradient(#fff,#eeeeee)"></div>
<div class="a" style="left:1623px;top:821px;width:1px;height:22px;background:#a6a6a6"></div>
<svg class="a" style="left:1631px;top:829px;" width="10" height="8" viewBox="0 0 10 8"><path d="M5 1L9.5 6h-9z" fill="#333"/></svg>
<div class="a" style="left:1647px;top:821px;width:1px;height:22px;background:#a6a6a6"></div>
<svg class="a" style="left:1655px;top:829px;" width="10" height="8" viewBox="0 0 10 8"><path d="M5 6L9.5 1h-9z" fill="#aaaaaa"/></svg>
<div class="a" style="left:1671px;top:821px;width:1px;height:22px;background:#a6a6a6"></div>
<svg class="a" style="left:1679px;top:829px;" width="10" height="8" viewBox="0 0 10 8"><path d="M5 5.6L9.5 1h-9z" fill="#aaaaaa"/><rect x="0.5" y="5.8" width="9" height="1.3" fill="#aaaaaa"/></svg>
<div class="t" style="left:1405px;top:771px;font-size:20px;color:rgba(140,140,140,0.5)">Activate Windows</div>
<div class="t" style="left:1405px;top:796px;font-size:15px;color:rgba(140,140,140,0.5)">Go to Settings to activate Windows.</div></body></html>
